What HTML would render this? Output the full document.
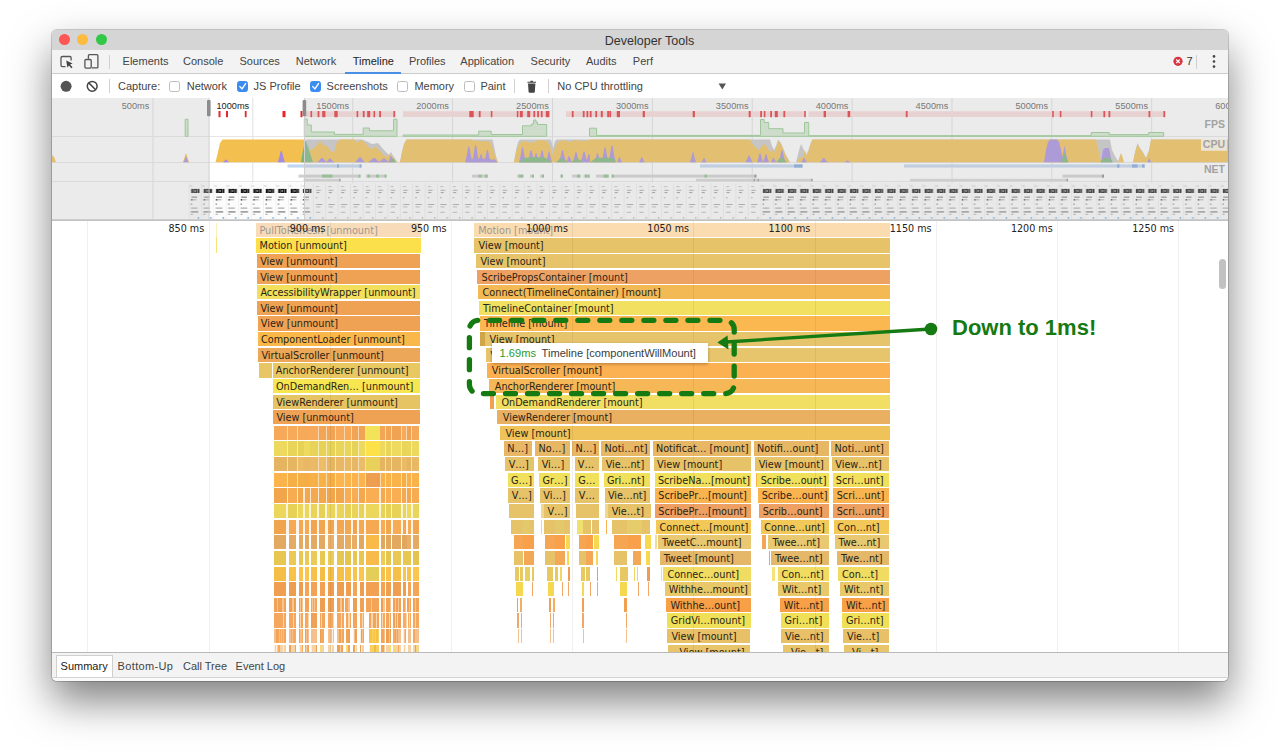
<!DOCTYPE html><html><head><meta charset="utf-8"><title>Developer Tools</title><style>
*{box-sizing:border-box;margin:0;padding:0}
html,body{width:1280px;height:755px;overflow:hidden;background:#fff}
body{position:relative;font-family:"Liberation Sans",sans-serif;font-size:11px;color:#333}
.abs{position:absolute}
#win{position:absolute;left:52px;top:30px;width:1176px;height:651px;border-radius:5px;background:#fff;
 box-shadow:0 20px 42px rgba(0,0,0,.5),0 0 0 1px rgba(0,0,0,.18);}
#clip{position:absolute;left:0;top:0;width:1176px;height:651px;border-radius:5px;overflow:hidden}
#title{position:absolute;left:0;top:0;width:100%;height:20px;background:#d5d5d5;text-align:center;font-size:12.5px;line-height:23px;color:#333;padding-left:19px}
.tl{position:absolute;top:4px;width:11px;height:11px;border-radius:50%}
#tabs{position:absolute;left:0;top:20px;width:100%;height:24px;background:#f3f3f3;border-bottom:1px solid #ccc}
#tabs span.t{position:absolute;top:4.3px;font-size:11px;line-height:14px;color:#444;white-space:nowrap}
#tools{position:absolute;left:0;top:44px;width:100%;height:25px;background:#fff;border-bottom:1px solid #ccc}
#tools span.t{position:absolute;top:5px;font-size:11px;line-height:14px;color:#444;white-space:nowrap}
.sep{position:absolute;width:1px;background:#d0d0d0}
.cb{position:absolute;top:7px;width:11px;height:11px;border:1px solid #bdbdbd;border-radius:2.5px;background:#fff}
.cb.on{background:#3b8cf0;border-color:#3b8cf0}
.fb{position:absolute;overflow:hidden;white-space:nowrap;font-family:"DejaVu Sans",sans-serif;font-size:9.7px;line-height:15.6px;color:#2a2416}
.rl{position:absolute;width:60px;text-align:right;font-family:"DejaVu Sans",sans-serif;font-size:9.6px;line-height:12px;color:#222;white-space:nowrap}

</style></head><body>
<div id="win"><div id="clip">
<div id="title">Developer Tools<div class="tl" style="left:7px;background:#fc5753"></div><div class="tl" style="left:24.8px;background:#fdbc40"></div><div class="tl" style="left:43.6px;background:#33c748"></div></div>
<div id="tabs">
<span class="t" style="left:70.6px;color:#444">Elements</span>
<span class="t" style="left:131.0px;color:#444">Console</span>
<span class="t" style="left:187.5px;color:#444">Sources</span>
<span class="t" style="left:243.8px;color:#444">Network</span>
<span class="t" style="left:300.8px;color:#222">Timeline</span>
<span class="t" style="left:356.9px;color:#444">Profiles</span>
<span class="t" style="left:408.3px;color:#444">Application</span>
<span class="t" style="left:478.6px;color:#444">Security</span>
<span class="t" style="left:534.0px;color:#444">Audits</span>
<span class="t" style="left:580.8px;color:#444">Perf</span>
<div class="abs" style="left:293px;top:22px;width:56px;height:2px;background:#4a8ee6"></div>
<div class="sep" style="left:57px;top:5px;height:14px"></div>
<div class="sep" style="left:1144px;top:5px;height:14px"></div>
<span class="t" style="left:1134.5px;color:#333">7</span>
<svg class="abs" style="left:0;top:0" width="1177" height="24" viewBox="52 50 1177 24">
<g fill="none" stroke="#555" stroke-width="1.3">
<path d="M65.5 66.6H62.3Q61 66.6 61 65.3V57.8Q61 56.5 62.3 56.5H69.8Q71.1 56.5 71.1 57.8V60.5"/>
<path d="M88.4 58.8V55.7Q88.4 54.7 89.4 54.7H96.9Q97.9 54.7 97.9 55.7V66.9Q97.9 67.9 96.9 67.9H91.8"/>
<rect x="84.9" y="59.5" width="6.3" height="8.6" rx="1.1"/>
</g>
<path d="M66.2 60.6L72.6 63.6L70.1 64.6L72.5 67.3L71.3 68.3L69 65.6L67.4 67.6Z" fill="#444"/>
<circle cx="1178" cy="61.3" r="4.6" fill="#d9333f"/>
<path d="M1176.2 59.5L1179.8 63.1M1179.8 59.5L1176.2 63.1" stroke="#fff" stroke-width="1.3"/>
<circle cx="1214" cy="56.4" r="1.3" fill="#444"/><circle cx="1214" cy="61.5" r="1.3" fill="#444"/><circle cx="1214" cy="66.6" r="1.3" fill="#444"/>
</svg>
</div>
<div id="tools">
<span class="t" style="left:66.0px">Capture:</span>
<span class="t" style="left:134.7px">Network</span>
<span class="t" style="left:201.6px">JS Profile</span>
<span class="t" style="left:274.6px">Screenshots</span>
<span class="t" style="left:362.4px">Memory</span>
<span class="t" style="left:428.4px">Paint</span>
<span class="t" style="left:505.3px">No CPU throttling</span>
<div class="cb" style="left:117.0px"></div>
<div class="cb on" style="left:185.3px"></div>
<div class="cb on" style="left:258.2px"></div>
<div class="cb" style="left:345.3px"></div>
<div class="cb" style="left:411.6px"></div>
<div class="sep" style="left:56.8px;top:5px;height:14px"></div>
<div class="sep" style="left:462.4px;top:5px;height:14px"></div>
<div class="sep" style="left:496.3px;top:5px;height:14px"></div>
<svg class="abs" style="left:0;top:0" width="1177" height="24" viewBox="52 74 1177 24">
<circle cx="66.1" cy="86.3" r="5.5" fill="#555"/>
<circle cx="92.2" cy="86.3" r="4.9" fill="none" stroke="#444" stroke-width="1.5"/>
<path d="M88.8 82.9L95.6 89.7" stroke="#444" stroke-width="1.5"/>
<g fill="none" stroke="#fff" stroke-width="1.4" stroke-linecap="round" stroke-linejoin="round">
<path d="M239.9 86.6L242 88.9L245.6 83.6"/><path d="M312.8 86.6L314.9 88.9L318.5 83.6"/></g>
<path d="M528 83.6H535.4L534.8 92Q534.7 92.8 533.9 92.8H529.5Q528.7 92.8 528.6 92ZM527.4 82.8V81.8H530.2L530.6 80.8H532.8L533.2 81.8H536V82.8Z" fill="#444"/>
<path d="M718.6 83.6H726L722.3 89.6Z" fill="#555"/>
</svg>
</div>
<svg class="abs" style="left:0;top:68px" width="1177" height="124" viewBox="52 98 1177 124" font-family="Liberation Sans, sans-serif">
<rect x="52" y="98" width="1177" height="122" fill="#fff"/>
<rect x="152.5" y="98" width="1" height="122" fill="#e0e0e0"/>
<rect x="252.3" y="98" width="1" height="122" fill="#e0e0e0"/>
<rect x="352.2" y="98" width="1" height="122" fill="#e0e0e0"/>
<rect x="452.1" y="98" width="1" height="122" fill="#e0e0e0"/>
<rect x="552.0" y="98" width="1" height="122" fill="#e0e0e0"/>
<rect x="651.9" y="98" width="1" height="122" fill="#e0e0e0"/>
<rect x="751.7" y="98" width="1" height="122" fill="#e0e0e0"/>
<rect x="851.6" y="98" width="1" height="122" fill="#e0e0e0"/>
<rect x="951.5" y="98" width="1" height="122" fill="#e0e0e0"/>
<rect x="1051.3" y="98" width="1" height="122" fill="#e0e0e0"/>
<rect x="1151.2" y="98" width="1" height="122" fill="#e0e0e0"/>
<rect x="1251.1" y="98" width="1" height="122" fill="#e0e0e0"/>
<rect x="52" y="136" width="1177" height="1" fill="#e6e6e6"/>
<rect x="52" y="162" width="1177" height="1" fill="#e6e6e6"/>
<rect x="52" y="181" width="1177" height="1" fill="#e6e6e6"/>
<rect x="304.5" y="111.3" width="90.5" height="5.6" fill="#fbd9d9"/>
<rect x="403" y="111.3" width="146.5" height="5.6" fill="#fbd9d9"/>
<rect x="566" y="111.3" width="239" height="5.6" fill="#fbd9d9"/>
<rect x="808.5" y="111.3" width="356.0" height="5.6" fill="#fbd9d9"/>
<rect x="218.5" y="111" width="2" height="6.2" fill="#e8262a"/>
<rect x="226" y="111" width="2" height="6.2" fill="#e8262a"/>
<rect x="244.8" y="111" width="1.8" height="6.2" fill="#e8262a"/>
<rect x="282.5" y="111" width="3" height="6.2" fill="#e8262a"/>
<rect x="300.5" y="111" width="2" height="6.2" fill="#e8262a"/>
<rect x="310.5" y="111" width="1.6" height="6.2" fill="#e8262a"/>
<rect x="317.6" y="111" width="1.8" height="6.2" fill="#e8262a"/>
<rect x="322.2" y="111" width="3.2" height="6.2" fill="#e8262a"/>
<rect x="334.3" y="111" width="3.4" height="6.2" fill="#e8262a"/>
<rect x="356.6" y="111" width="1.6" height="6.2" fill="#e8262a"/>
<rect x="362.8" y="111" width="1.8" height="6.2" fill="#e8262a"/>
<rect x="367.2" y="111" width="3" height="6.2" fill="#e8262a"/>
<rect x="373.5" y="111" width="1.6" height="6.2" fill="#e8262a"/>
<rect x="379.2" y="111" width="1.8" height="6.2" fill="#e8262a"/>
<rect x="393.4" y="111" width="1.8" height="6.2" fill="#e8262a"/>
<rect x="469.3" y="111" width="4.4" height="6.2" fill="#e8262a"/>
<rect x="478.8" y="111" width="1.8" height="6.2" fill="#e8262a"/>
<rect x="490.8" y="111" width="1.6" height="6.2" fill="#e8262a"/>
<rect x="516.8" y="111" width="1.6" height="6.2" fill="#e8262a"/>
<rect x="519.8" y="111" width="3" height="6.2" fill="#e8262a"/>
<rect x="527.2" y="111" width="3" height="6.2" fill="#e8262a"/>
<rect x="533.4" y="111" width="1.8" height="6.2" fill="#e8262a"/>
<rect x="537.2" y="111" width="1.8" height="6.2" fill="#e8262a"/>
<rect x="540.8" y="111" width="1.8" height="6.2" fill="#e8262a"/>
<rect x="545.8" y="111" width="3.6" height="6.2" fill="#e8262a"/>
<rect x="571.8" y="111" width="1.8" height="6.2" fill="#e8262a"/>
<rect x="582.8" y="111" width="1.8" height="6.2" fill="#e8262a"/>
<rect x="586.5" y="111" width="1.8" height="6.2" fill="#e8262a"/>
<rect x="589.8" y="111" width="1.8" height="6.2" fill="#e8262a"/>
<rect x="595.3" y="111" width="1.8" height="6.2" fill="#e8262a"/>
<rect x="600.8" y="111" width="2" height="6.2" fill="#e8262a"/>
<rect x="607.2" y="111" width="1.8" height="6.2" fill="#e8262a"/>
<rect x="609.3" y="111" width="1.8" height="6.2" fill="#e8262a"/>
<rect x="616.8" y="111" width="3.2" height="6.2" fill="#e8262a"/>
<rect x="642.7" y="111" width="2.2" height="6.2" fill="#e8262a"/>
<rect x="692.7" y="111" width="2.2" height="6.2" fill="#e8262a"/>
<rect x="748.7" y="111" width="2" height="6.2" fill="#e8262a"/>
<rect x="760.2" y="111" width="1.8" height="6.2" fill="#e8262a"/>
<rect x="763.8" y="111" width="1.6" height="6.2" fill="#e8262a"/>
<rect x="770.2" y="111" width="1.8" height="6.2" fill="#e8262a"/>
<rect x="774.8" y="111" width="3" height="6.2" fill="#e8262a"/>
<rect x="783.4" y="111" width="1.8" height="6.2" fill="#e8262a"/>
<rect x="804.2" y="111" width="1.6" height="6.2" fill="#e8262a"/>
<rect x="823.6" y="111" width="2.4" height="6.2" fill="#e8262a"/>
<rect x="847.6" y="111" width="2.6" height="6.2" fill="#e8262a"/>
<rect x="905.8" y="111" width="1.8" height="6.2" fill="#e8262a"/>
<rect x="1052.2" y="111" width="1.6" height="6.2" fill="#e8262a"/>
<rect x="1059.8" y="111" width="1.6" height="6.2" fill="#e8262a"/>
<rect x="1090.8" y="111" width="1.6" height="6.2" fill="#e8262a"/>
<rect x="1103.4" y="111" width="1.8" height="6.2" fill="#e8262a"/>
<rect x="1108.5" y="111" width="1.8" height="6.2" fill="#e8262a"/>
<rect x="1148.5" y="111" width="1.8" height="6.2" fill="#e8262a"/>
<rect x="1163.4" y="111" width="1.8" height="6.2" fill="#e8262a"/>
<path d="M185.2 136.3V119.3H188V136.3Z" fill="#d6ebd1" stroke="#8fcb89" stroke-width="1" stroke-linejoin="round"/>
<path d="M304.3 136.3V119H307.2V125H311.3V132H334.5V134.4H363.2V128H369.5V130.8H393.6V119.2H397V136.3Z" fill="#d6ebd1" stroke="#8fcb89" stroke-width="1" stroke-linejoin="round"/>
<path d="M403 136.3V135H478.7V131.2H491.2V134.5H522.5V125.8H531.5V124H533.6V120H536V122.3H537.5V124.5H546.7V136.3Z" fill="#d6ebd1" stroke="#8fcb89" stroke-width="1" stroke-linejoin="round"/>
<path d="M589.5 136.3V128.2H596.6V135.4H760.5V119.5H764.2V122.5H768.7V128.7H783V133H804.5V122.5H808.7V135.7H1091.2V132.5H1109.2V134.6H1148.7V132.5H1163.7V136.3Z" fill="#d6ebd1" stroke="#8fcb89" stroke-width="1" stroke-linejoin="round"/>
<path d="M52.0 157.0 L53.0 155.0 L54.5 158.0 L56.0 162.3 L52.0 162.3Z" fill="#f3c04f"/>
<path d="M182.8 162.3 L184.2 158.4 L185.4 154.3 L186.0 153.6 L186.6 154.3 L187.8 158.4 L189.2 162.3Z" fill="#f3c04f"/>
<path d="M183.4 162.3 L184.6 159.9 L185.5 157.4 L186.0 157.0 L186.5 157.4 L187.4 159.9 L188.6 162.3Z" fill="#a68be3"/>
<path d="M215.5 162.3 L218.0 152.0 L220.0 143.0 L222.5 139.6 L304.5 139.6 L304.5 162.3Z" fill="#f3c04f"/>
<path d="M223.0 162.3 L224.3 161.0 L225.4 159.7 L226.0 159.5 L226.6 159.7 L227.7 161.0 L229.0 162.3Z" fill="#a68be3"/>
<path d="M277.7 162.3 L279.3 157.0 L280.6 151.5 L281.3 150.6 L282.0 151.5 L283.3 157.0 L284.9 162.3Z" fill="#a68be3"/>
<path d="M301.0 162.3 L304.0 146.0 L306.0 139.6 L362.0 139.6 L366.0 141.0 L372.0 144.0 L378.0 143.0 L384.0 150.0 L389.0 155.0 L391.0 152.0 L394.0 157.0 L397.5 162.3Z" fill="#c9c9c9"/>
<path d="M301.0 162.3 L304.0 150.0 L311.0 150.0 L316.0 146.0 L320.0 141.0 L323.0 145.0 L327.0 146.0 L331.0 151.0 L333.8 153.0 L337.0 142.0 L340.0 139.6 L355.0 139.6 L357.0 143.0 L359.0 141.0 L362.0 140.0 L366.0 144.0 L371.0 149.0 L376.0 147.0 L381.0 152.0 L386.0 157.0 L390.0 154.0 L393.0 158.0 L397.5 162.3Z" fill="#f3c04f"/>
<path d="M301.0 162.3 L303.0 150.0 L305.5 140.0 L308.0 147.0 L310.0 153.0 L313.0 162.3Z" fill="#77b577"/>
<path d="M317.0 162.3 L319.2 160.4 L321.0 158.3 L322.0 158.0 L323.0 158.3 L324.8 160.4 L327.0 162.3Z" fill="#a68be3"/>
<path d="M326.0 162.3 L327.8 160.6 L329.2 158.8 L330.0 158.5 L330.8 158.8 L332.2 160.6 L334.0 162.3Z" fill="#a68be3"/>
<path d="M355.0 162.3 L357.2 159.9 L359.0 157.4 L360.0 157.0 L361.0 157.4 L362.8 159.9 L365.0 162.3Z" fill="#a68be3"/>
<path d="M368.0 162.3 L370.7 160.4 L372.8 158.3 L374.0 158.0 L375.2 158.3 L377.3 160.4 L380.0 162.3Z" fill="#a68be3"/>
<path d="M379.0 162.3 L381.2 160.6 L383.0 158.8 L384.0 158.5 L385.0 158.8 L386.8 160.6 L389.0 162.3Z" fill="#a68be3"/>
<path d="M388.0 162.3 L389.4 159.5 L390.4 156.5 L391.0 156.0 L391.6 156.5 L392.6 159.5 L394.0 162.3Z" fill="#a68be3"/>
<path d="M390.0 162.3 L391.4 160.4 L392.4 158.3 L393.0 158.0 L393.6 158.3 L394.6 160.4 L396.0 162.3Z" fill="#77b577"/>
<path d="M400.0 162.3 L402.0 152.0 L404.0 144.0 L406.5 139.6 L492.5 139.6 L494.0 146.0 L496.0 156.0 L498.0 162.3Z" fill="#c9c9c9"/>
<path d="M400.0 162.3 L402.0 152.0 L404.0 144.0 L406.5 139.6 L472.0 139.6 L474.0 141.0 L478.0 140.5 L483.0 141.5 L488.0 141.0 L491.0 143.0 L493.0 150.0 L495.5 157.0 L498.0 162.3Z" fill="#f3c04f"/>
<path d="M465.2 162.3 L466.8 155.0 L468.1 147.3 L468.8 146.0 L469.5 147.3 L470.8 155.0 L472.4 162.3Z" fill="#a68be3"/>
<path d="M472.2 162.3 L473.7 154.3 L474.9 146.0 L475.6 144.6 L476.3 146.0 L477.5 154.3 L479.0 162.3Z" fill="#a68be3"/>
<path d="M478.0 162.3 L479.4 158.6 L480.4 154.7 L481.0 154.0 L481.6 154.7 L482.6 158.6 L484.0 162.3Z" fill="#a68be3"/>
<path d="M484.2 162.3 L485.6 156.5 L486.8 150.5 L487.4 149.5 L488.0 150.5 L489.2 156.5 L490.6 162.3Z" fill="#a68be3"/>
<path d="M490.5 162.3 L492.1 160.8 L493.3 159.3 L494.0 159.0 L494.7 159.3 L495.9 160.8 L497.5 162.3Z" fill="#a68be3"/>
<path d="M466.0 162.3 L470.0 159.0 L480.0 158.5 L490.0 159.0 L497.0 162.3Z" fill="#a68be3"/>
<path d="M514.0 162.3 L516.0 150.0 L518.0 142.0 L520.0 139.6 L551.0 139.6 L553.0 148.0 L555.0 141.0 L557.0 139.6 L590.0 139.6 L590.0 162.3Z" fill="#c9c9c9"/>
<path d="M514.0 162.3 L516.0 152.0 L518.0 146.0 L521.0 142.0 L526.0 141.0 L531.0 143.0 L536.0 141.0 L541.0 140.0 L547.0 141.0 L550.0 146.0 L552.5 155.0 L555.0 148.0 L558.0 142.0 L563.0 140.0 L570.0 142.0 L575.0 140.0 L582.0 141.0 L590.0 140.0 L590.0 162.3Z" fill="#f3c04f"/>
<path d="M519.1 162.3 L520.6 155.4 L521.8 148.2 L522.5 147.0 L523.2 148.2 L524.4 155.4 L525.9 162.3Z" fill="#a68be3"/>
<path d="M527.4 162.3 L529.0 156.8 L530.3 151.0 L531.0 150.0 L531.7 151.0 L533.0 156.8 L534.6 162.3Z" fill="#a68be3"/>
<path d="M533.0 162.3 L534.4 158.1 L535.4 153.7 L536.0 153.0 L536.6 153.7 L537.6 158.1 L539.0 162.3Z" fill="#a68be3"/>
<path d="M538.6 162.3 L540.1 156.8 L541.3 151.0 L542.0 150.0 L542.7 151.0 L543.9 156.8 L545.4 162.3Z" fill="#a68be3"/>
<path d="M546.0 162.3 L547.4 157.2 L548.4 151.9 L549.0 151.0 L549.6 151.9 L550.6 157.2 L552.0 162.3Z" fill="#a68be3"/>
<path d="M558.9 162.3 L560.5 156.8 L561.8 151.0 L562.5 150.0 L563.2 151.0 L564.5 156.8 L566.1 162.3Z" fill="#a68be3"/>
<path d="M566.0 162.3 L567.4 159.5 L568.4 156.5 L569.0 156.0 L569.6 156.5 L570.6 159.5 L572.0 162.3Z" fill="#a68be3"/>
<path d="M572.5 162.3 L574.1 157.7 L575.3 152.8 L576.0 152.0 L576.7 152.8 L577.9 157.7 L579.5 162.3Z" fill="#a68be3"/>
<path d="M580.5 162.3 L582.1 157.2 L583.3 151.9 L584.0 151.0 L584.7 151.9 L585.9 157.2 L587.5 162.3Z" fill="#a68be3"/>
<path d="M586.0 162.3 L587.4 158.6 L588.4 154.7 L589.0 154.0 L589.6 154.7 L590.6 158.6 L592.0 162.3Z" fill="#a68be3"/>
<path d="M519.0 162.3 L524.0 158.0 L533.0 157.0 L545.0 157.5 L552.0 162.3Z" fill="#77b577"/>
<path d="M556.0 162.3 L561.0 158.0 L568.0 162.3Z" fill="#77b577"/>
<path d="M571.0 162.3 L577.0 158.0 L583.0 162.3Z" fill="#77b577"/>
<path d="M519.0 162.3 L528.0 159.5 L540.0 159.0 L552.0 162.3Z" fill="#77b577"/>
<path d="M590.0 162.3 L590.0 139.6 L750.0 139.6 L770.0 139.6 L772.0 146.0 L774.0 150.0 L776.0 146.0 L778.0 139.6 L781.0 143.0 L786.0 155.0 L790.0 162.3 L796.0 162.3 L799.0 150.0 L801.0 144.0 L803.0 148.0 L806.0 155.0 L808.5 150.0 L811.0 142.0 L812.5 139.6 L1096.0 139.6 L1110.0 139.6 L1112.0 150.0 L1116.0 158.0 L1119.0 162.3 L1124.0 162.3 L1133.0 162.3 L1135.0 152.0 L1137.5 143.0 L1140.0 148.0 L1143.0 152.0 L1146.0 158.0 L1149.0 150.0 L1151.0 139.6 L1228.5 139.6 L1228.5 162.3Z" fill="#c9c9c9"/>
<path d="M590.0 162.3 L590.0 139.6 L750.0 139.6 L752.0 143.0 L755.0 147.0 L759.0 150.0 L762.0 146.0 L765.0 144.0 L768.0 149.0 L771.0 152.0 L773.0 149.0 L774.5 153.0 L776.5 147.0 L778.5 141.0 L781.0 144.0 L786.0 156.0 L790.0 162.3 L797.0 162.3 L799.0 158.0 L803.0 157.0 L805.0 150.0 L806.5 156.0 L808.5 151.0 L811.0 143.0 L812.5 139.6 L1096.0 139.6 L1098.0 148.0 L1100.0 158.0 L1102.0 162.3 L1118.0 162.3 L1119.5 157.0 L1121.0 153.0 L1122.5 157.0 L1124.0 162.3 L1133.0 162.3 L1135.0 153.0 L1137.5 144.0 L1140.0 149.0 L1143.0 153.0 L1146.0 158.5 L1149.0 151.0 L1151.0 139.6 L1228.5 139.6 L1228.5 162.3Z" fill="#f3c04f"/>
<path d="M594.5 162.3 L595.9 158.1 L596.9 153.7 L597.5 153.0 L598.1 153.7 L599.1 158.1 L600.5 162.3Z" fill="#a68be3"/>
<path d="M601.6 162.3 L603.1 155.4 L604.3 148.2 L605.0 147.0 L605.7 148.2 L606.9 155.4 L608.4 162.3Z" fill="#a68be3"/>
<path d="M608.4 162.3 L610.0 154.5 L611.3 146.4 L612.0 145.0 L612.7 146.4 L614.0 154.5 L615.6 162.3Z" fill="#a68be3"/>
<path d="M616.9 162.3 L618.1 159.9 L619.0 157.4 L619.5 157.0 L620.0 157.4 L620.9 159.9 L622.1 162.3Z" fill="#a68be3"/>
<path d="M639.0 162.3 L640.3 159.9 L641.2 157.4 L641.8 157.0 L642.4 157.4 L643.3 159.9 L644.6 162.3Z" fill="#a68be3"/>
<path d="M690.0 162.3 L691.4 157.7 L692.4 152.8 L693.0 152.0 L693.6 152.8 L694.6 157.7 L696.0 162.3Z" fill="#a68be3"/>
<path d="M701.4 162.3 L702.6 160.4 L703.5 158.3 L704.0 158.0 L704.5 158.3 L705.4 160.4 L706.6 162.3Z" fill="#a68be3"/>
<path d="M745.4 162.3 L747.0 159.2 L748.3 156.0 L749.0 155.5 L749.7 156.0 L751.0 159.2 L752.6 162.3Z" fill="#a68be3"/>
<path d="M757.0 162.3 L758.4 158.1 L759.4 153.7 L760.0 153.0 L760.6 153.7 L761.6 158.1 L763.0 162.3Z" fill="#a68be3"/>
<path d="M763.0 162.3 L764.4 158.6 L765.4 154.7 L766.0 154.0 L766.6 154.7 L767.6 158.6 L769.0 162.3Z" fill="#a68be3"/>
<path d="M770.9 162.3 L772.1 160.1 L773.0 157.9 L773.5 157.5 L774.0 157.9 L774.9 160.1 L776.1 162.3Z" fill="#a68be3"/>
<path d="M778.6 162.3 L780.1 156.8 L781.3 151.0 L782.0 150.0 L782.7 151.0 L783.9 156.8 L785.4 162.3Z" fill="#a68be3"/>
<path d="M801.0 162.3 L802.4 160.4 L803.4 158.3 L804.0 158.0 L804.6 158.3 L805.6 160.4 L807.0 162.3Z" fill="#a68be3"/>
<path d="M819.8 162.3 L821.6 160.4 L823.0 158.3 L823.8 158.0 L824.6 158.3 L826.0 160.4 L827.8 162.3Z" fill="#a68be3"/>
<path d="M844.5 162.3 L845.9 161.5 L846.9 160.6 L847.5 160.5 L848.1 160.6 L849.1 161.5 L850.5 162.3Z" fill="#a68be3"/>
<path d="M590.0 162.3 L596.0 158.0 L606.0 157.5 L614.0 158.5 L616.0 162.3Z" fill="#77b577"/>
<path d="M776.0 162.3 L781.0 157.0 L787.0 162.3Z" fill="#77b577"/>
<path d="M1044.0 162.3 L1046.0 150.0 L1048.0 142.0 L1050.0 139.6 L1057.0 139.6 L1059.0 142.0 L1061.0 150.0 L1062.5 157.0 L1064.5 145.5 L1066.5 156.0 L1068.0 162.3Z" fill="#a68be3"/>
<path d="M1060.5 162.3 L1064.5 153.0 L1068.0 162.3Z" fill="#77b577"/>
<path d="M1101.0 162.3 L1103.0 150.0 L1105.0 148.0 L1109.0 148.0 L1111.0 158.0 L1112.0 162.3Z" fill="#a68be3"/>
<path d="M1100.0 162.3 L1104.0 158.0 L1110.0 157.5 L1113.0 162.3Z" fill="#77b577"/>
<path d="M1147.3 162.3 L1148.2 160.6 L1148.9 158.8 L1149.3 158.5 L1149.7 158.8 L1150.4 160.6 L1151.3 162.3Z" fill="#a68be3"/>
<rect x="287.5" y="164.4" width="74.0" height="3.2" fill="#c3d6f0"/>
<rect x="700" y="164.4" width="102.5" height="3.2" fill="#c3d6f0"/>
<rect x="904" y="164.4" width="241" height="3.2" fill="#c3d6f0"/>
<rect x="337" y="164.4" width="2" height="3.2" fill="#7fa6dc"/>
<rect x="359.5" y="164.4" width="2" height="3.2" fill="#7fa6dc"/>
<rect x="794" y="164.4" width="8.5" height="3.2" fill="#7fa6dc"/>
<rect x="1117" y="164.4" width="2.5" height="3.2" fill="#7fa6dc"/>
<rect x="1132" y="164.4" width="5.5" height="3.2" fill="#7fa6dc"/>
<rect x="1142" y="164.4" width="2.5" height="3.2" fill="#7fa6dc"/>
<rect x="298.5" y="174.6" width="41.5" height="3" fill="#cfcfcf"/>
<rect x="339.5" y="174.6" width="21.0" height="3" fill="#cfcfcf"/>
<rect x="366" y="174.6" width="20.5" height="3" fill="#cfcfcf"/>
<rect x="472" y="174.6" width="16" height="3" fill="#cfcfcf"/>
<rect x="517" y="174.6" width="7" height="3" fill="#cfcfcf"/>
<rect x="530" y="174.6" width="4" height="3" fill="#cfcfcf"/>
<rect x="540" y="174.6" width="4" height="3" fill="#cfcfcf"/>
<rect x="560" y="174.6" width="3" height="3" fill="#cfcfcf"/>
<rect x="572" y="174.6" width="9" height="3" fill="#cfcfcf"/>
<rect x="583.5" y="174.6" width="6.5" height="3" fill="#cfcfcf"/>
<rect x="596" y="174.6" width="13" height="3" fill="#cfcfcf"/>
<rect x="611" y="174.6" width="3" height="3" fill="#cfcfcf"/>
<rect x="614" y="174.6" width="142" height="3" fill="#cfcfcf"/>
<rect x="1062.5" y="174.6" width="41.5" height="3" fill="#cfcfcf"/>
<rect x="322" y="174.6" width="10.5" height="3" fill="#86c186"/>
<rect x="358.5" y="174.6" width="2" height="3" fill="#86c186"/>
<rect x="367.5" y="174.6" width="2.5" height="3" fill="#86c186"/>
<rect x="376" y="174.6" width="3" height="3" fill="#86c186"/>
<rect x="384.5" y="174.6" width="2" height="3" fill="#86c186"/>
<rect x="478.5" y="174.6" width="3" height="3" fill="#86c186"/>
<rect x="485" y="174.6" width="2.5" height="3" fill="#86c186"/>
<rect x="519" y="174.6" width="4" height="3" fill="#86c186"/>
<rect x="532" y="174.6" width="2" height="3" fill="#86c186"/>
<rect x="542" y="174.6" width="2" height="3" fill="#86c186"/>
<rect x="561" y="174.6" width="2" height="3" fill="#86c186"/>
<rect x="577" y="174.6" width="3" height="3" fill="#86c186"/>
<rect x="585" y="174.6" width="2" height="3" fill="#86c186"/>
<rect x="587.5" y="174.6" width="2" height="3" fill="#86c186"/>
<rect x="603.5" y="174.6" width="5" height="3" fill="#86c186"/>
<rect x="612" y="174.6" width="2" height="3" fill="#86c186"/>
<rect x="704.5" y="174.6" width="2.5" height="3" fill="#86c186"/>
<rect x="754.5" y="174.6" width="2" height="3" fill="#8a8a8a"/>
<rect x="1102" y="174.6" width="2" height="3" fill="#8a8a8a"/>
<rect x="303.5" y="178.8" width="36.5" height="2.6" fill="#d6d6d6"/>
<rect x="696" y="178.8" width="116.5" height="2.6" fill="#d6d6d6"/>
<rect x="910" y="178.8" width="157.5" height="2.6" fill="#d6d6d6"/>
<rect x="753.5" y="178.8" width="1.6" height="2.6" fill="#9a9a9a"/>
<rect x="757.5" y="178.8" width="1.6" height="2.6" fill="#9a9a9a"/>
<rect x="811" y="178.8" width="1.6" height="2.6" fill="#9a9a9a"/>
<rect x="1066.5" y="178.8" width="1.6" height="2.6" fill="#9a9a9a"/>
<rect x="339" y="178.8" width="1.6" height="2.6" fill="#9a9a9a"/>
<defs>
<pattern id="thA" x="188.5" y="183" width="12.43" height="38" patternUnits="userSpaceOnUse"><rect x="0" y="0" width="12.43" height="38" fill="#fcfcfc"/><rect x="0" y="0" width=".6" height="38" fill="#ebebeb"/><rect x="2.7" y="5.9" width="2" height="4.1" fill="#111"/><rect x="5" y="5.9" width="3.7" height="4.1" fill="#111"/><rect x="6.1" y="7.1" width="1.4" height="1.7" fill="#aaa"/><rect x="9" y="5.9" width="2" height="4.1" fill="#111"/><rect x="1.2" y="2.6" width="2.4" height=".8" fill="#bbb"/><rect x="3" y="13.6" width="5.6" height="1.1" fill="#777"/><rect x="2.6" y="16" width="1.6" height="1.6" fill="#444"/><rect x="4.8" y="16.3" width="3.4" height="1" fill="#aaa"/><rect x="2.4" y="20.6" width="1.2" height="1.1" fill="#555"/><rect x="2.4" y="24.6" width="6.6" height="1" fill="#9a9a9a"/><rect x="2.4" y="28.3" width="7.4" height="1.2" fill="#777"/><rect x="2.4" y="30.8" width="2" height="1" fill="#999"/><rect x="9.2" y="34.2" width="1.5" height="1.4" fill="#4a9fe6"/></pattern>
<pattern id="thB" x="188.5" y="183" width="12.43" height="38" patternUnits="userSpaceOnUse"><rect x="0" y="0" width="12.43" height="38" fill="#fcfcfc"/><rect x="0" y="0" width=".6" height="38" fill="#e6e6e6"/><rect x="3.2" y="3.2" width="3" height=".9" fill="#b5b5b5"/><rect x="3.4" y="6.8" width="4.6" height="1" fill="#a5a5a5"/><rect x="3.6" y="9" width="3" height="1.1" fill="#999"/><rect x="3.2" y="14.2" width="1.2" height="1.1" fill="#888"/><rect x="3.2" y="21" width="6.4" height="1" fill="#a5a5a5"/><rect x="3.4" y="23.4" width="4.2" height="1" fill="#b5b5b5"/><rect x="3.2" y="28.8" width="4.4" height="1" fill="#b5b5b5"/><rect x="9.5" y="34.2" width="1.3" height="1.2" fill="#999"/></pattern>
</defs>
<rect x="188.5" y="183" width="124.3" height="36.5" fill="url(#thA)"/>
<rect x="312.8" y="183" width="447.5" height="36.5" fill="url(#thB)"/>
<rect x="760.3" y="183" width="468.5" height="36.5" fill="url(#thA)"/>
<rect x="52" y="98" width="157" height="122" fill="rgba(190,190,190,0.31)"/>
<rect x="304.5" y="98" width="925" height="122" fill="rgba(190,190,190,0.31)"/>
<rect x="208.6" y="98" width="1" height="122" fill="#cfcfcf"/><rect x="304" y="98" width="1" height="122" fill="#cfcfcf"/>
<text x="149.3" y="108.6" font-size="9.2" text-anchor="end" fill="#777">500ms</text>
<text x="249.2" y="108.6" font-size="9.2" text-anchor="end" fill="#222">1000ms</text>
<text x="349.0" y="108.6" font-size="9.2" text-anchor="end" fill="#777">1500ms</text>
<text x="448.9" y="108.6" font-size="9.2" text-anchor="end" fill="#777">2000ms</text>
<text x="548.8" y="108.6" font-size="9.2" text-anchor="end" fill="#777">2500ms</text>
<text x="648.6" y="108.6" font-size="9.2" text-anchor="end" fill="#777">3000ms</text>
<text x="748.5" y="108.6" font-size="9.2" text-anchor="end" fill="#777">3500ms</text>
<text x="848.4" y="108.6" font-size="9.2" text-anchor="end" fill="#777">4000ms</text>
<text x="948.3" y="108.6" font-size="9.2" text-anchor="end" fill="#777">4500ms</text>
<text x="1048.1" y="108.6" font-size="9.2" text-anchor="end" fill="#777">5000ms</text>
<text x="1148.0" y="108.6" font-size="9.2" text-anchor="end" fill="#777">5500ms</text>
<text x="1247.9" y="108.6" font-size="9.2" text-anchor="end" fill="#777">6000ms</text>
<rect x="207" y="100" width="3.6" height="16.2" rx="1" fill="#8c8c8c"/><rect x="302.6" y="100" width="3.6" height="16.2" rx="1" fill="#8c8c8c"/>
<rect x="1203" y="118.80000000000001" width="24" height="12" fill="rgba(236,236,236,.8)"/>
<text x="1225" y="128.3" font-size="10.5" font-weight="bold" text-anchor="end" fill="#a2a2a2">FPS</text>
<rect x="1201" y="138.8" width="26" height="12" fill="rgba(236,236,236,.8)"/>
<text x="1225" y="148.3" font-size="10.5" font-weight="bold" text-anchor="end" fill="#a2a2a2">CPU</text>
<rect x="1202" y="163.8" width="25" height="12" fill="rgba(236,236,236,.8)"/>
<text x="1225" y="173.3" font-size="10.5" font-weight="bold" text-anchor="end" fill="#a2a2a2">NET</text>
<rect x="52" y="219.3" width="1177" height="2" fill="#c2c2c2"/>
</svg>
<div id="flame" class="abs" style="left:0;top:191.3px;width:1177px;height:430.7px;overflow:hidden;background:#fff"></div>
<div class="fb" style="left:164.4px;top:192.5px;width:1px;height:30px;background:#f7e27a"></div>
<div class="fb" style="left:204.2px;top:192.7px;width:164.4px;height:14.3px;background:#f1b36c;padding-left:3.2px">PullToRefresh [unmount]</div>
<div class="fb" style="left:204.4px;top:208.3px;width:164.2px;height:14.3px;background:#fbe04b;padding-left:3.2px">Motion [unmount]</div>
<div class="fb" style="left:205.0px;top:223.9px;width:163.4px;height:14.3px;background:#f0a254;padding-left:3.2px">View [unmount]</div>
<div class="fb" style="left:205.0px;top:239.6px;width:163.0px;height:14.3px;background:#f0a254;padding-left:3.2px">View [unmount]</div>
<div class="fb" style="left:205.2px;top:255.2px;width:162.8px;height:14.3px;background:#f2e05c;padding-left:3.2px">AccessibilityWrapper [unmount]</div>
<div class="fb" style="left:205.2px;top:270.8px;width:162.8px;height:14.3px;background:#f0a254;padding-left:3.2px">View [unmount]</div>
<div class="fb" style="left:205.6px;top:286.4px;width:162.4px;height:14.3px;background:#f0a254;padding-left:3.2px">View [unmount]</div>
<div class="fb" style="left:205.8px;top:302.1px;width:162.2px;height:14.3px;background:#fbb84a;padding-left:3.2px">ComponentLoader [unmount]</div>
<div class="fb" style="left:206.2px;top:317.7px;width:161.8px;height:14.3px;background:#eda758;padding-left:3.2px">VirtualScroller [unmount]</div>
<div class="fb" style="left:206.6px;top:333.3px;width:13.6px;height:14.3px;background:#e8c666;"></div>
<div class="fb" style="left:220.6px;top:333.3px;width:147.4px;height:14.3px;background:#e9c862;padding-left:3.2px">AnchorRenderer [unmount]</div>
<div class="fb" style="left:220.8px;top:348.9px;width:147.2px;height:14.3px;background:#f8e650;padding-left:3.2px">OnDemandRen… [unmount]</div>
<div class="fb" style="left:221.0px;top:364.6px;width:147.0px;height:14.3px;background:#e6c464;padding-left:3.2px">ViewRenderer [unmount]</div>
<div class="fb" style="left:221.2px;top:380.2px;width:146.8px;height:14.3px;background:#f0a254;padding-left:3.2px">View [unmount]</div>
<div class="fb" style="left:221.8px;top:395.8px;width:145.6px;height:14.3px;background:#f9d6b2;"></div>
<div class="fb" style="left:221.8px;top:395.8px;width:13.2px;height:14.3px;background:#f5a959;"></div>
<div class="fb" style="left:235.7px;top:395.8px;width:9.4px;height:14.3px;background:#f6aa5a;"></div>
<div class="fb" style="left:245.9px;top:395.8px;width:5.8px;height:14.3px;background:#f5a959;"></div>
<div class="fb" style="left:252.4px;top:395.8px;width:5.3px;height:14.3px;background:#f5a959;"></div>
<div class="fb" style="left:258.4px;top:395.8px;width:7.5px;height:14.3px;background:#f6aa5a;"></div>
<div class="fb" style="left:266.6px;top:395.8px;width:7.4px;height:14.3px;background:#f1a555;"></div>
<div class="fb" style="left:274.8px;top:395.8px;width:8.5px;height:14.3px;background:#f0a454;"></div>
<div class="fb" style="left:284.0px;top:395.8px;width:8.1px;height:14.3px;background:#f6aa5a;"></div>
<div class="fb" style="left:292.9px;top:395.8px;width:6.3px;height:14.3px;background:#f5a959;"></div>
<div class="fb" style="left:299.9px;top:395.8px;width:6.1px;height:14.3px;background:#f0a454;"></div>
<div class="fb" style="left:306.7px;top:395.8px;width:6.1px;height:14.3px;background:#efa353;"></div>
<div class="fb" style="left:313.5px;top:395.8px;width:14.1px;height:14.3px;background:#f3e35b;"></div>
<div class="fb" style="left:328.4px;top:395.8px;width:4.8px;height:14.3px;background:#f2a656;"></div>
<div class="fb" style="left:333.9px;top:395.8px;width:5.5px;height:14.3px;background:#f0a454;"></div>
<div class="fb" style="left:340.1px;top:395.8px;width:9.4px;height:14.3px;background:#efa353;"></div>
<div class="fb" style="left:350.2px;top:395.8px;width:4.3px;height:14.3px;background:#f6aa5a;"></div>
<div class="fb" style="left:355.2px;top:395.8px;width:4.1px;height:14.3px;background:#eea252;"></div>
<div class="fb" style="left:360.1px;top:395.8px;width:7.3px;height:14.3px;background:#f4a858;"></div>
<div class="fb" style="left:221.8px;top:411.4px;width:145.6px;height:14.3px;background:#f5ecb4;"></div>
<div class="fb" style="left:221.8px;top:411.4px;width:13.2px;height:14.3px;background:#edd95d;"></div>
<div class="fb" style="left:235.7px;top:411.4px;width:9.4px;height:14.3px;background:#e8d458;"></div>
<div class="fb" style="left:245.9px;top:411.4px;width:5.8px;height:14.3px;background:#e6d256;"></div>
<div class="fb" style="left:252.4px;top:411.4px;width:5.3px;height:14.3px;background:#eeda5e;"></div>
<div class="fb" style="left:258.4px;top:411.4px;width:7.5px;height:14.3px;background:#e7d357;"></div>
<div class="fb" style="left:266.6px;top:411.4px;width:7.4px;height:14.3px;background:#e6d256;"></div>
<div class="fb" style="left:274.8px;top:411.4px;width:8.5px;height:14.3px;background:#e6d256;"></div>
<div class="fb" style="left:284.0px;top:411.4px;width:8.1px;height:14.3px;background:#e9d559;"></div>
<div class="fb" style="left:292.9px;top:411.4px;width:6.3px;height:14.3px;background:#e9d559;"></div>
<div class="fb" style="left:299.9px;top:411.4px;width:6.1px;height:14.3px;background:#e6d256;"></div>
<div class="fb" style="left:306.7px;top:411.4px;width:6.1px;height:14.3px;background:#edd95d;"></div>
<div class="fb" style="left:313.5px;top:411.4px;width:14.1px;height:14.3px;background:#fce149;"></div>
<div class="fb" style="left:328.4px;top:411.4px;width:4.8px;height:14.3px;background:#edd95d;"></div>
<div class="fb" style="left:333.9px;top:411.4px;width:5.5px;height:14.3px;background:#e9d559;"></div>
<div class="fb" style="left:340.1px;top:411.4px;width:9.4px;height:14.3px;background:#eeda5e;"></div>
<div class="fb" style="left:350.3px;top:411.4px;width:4.3px;height:14.3px;background:#e9d559;"></div>
<div class="fb" style="left:355.3px;top:411.4px;width:4.1px;height:14.3px;background:#ead65a;"></div>
<div class="fb" style="left:360.1px;top:411.4px;width:7.3px;height:14.3px;background:#edd95d;"></div>
<div class="fb" style="left:221.8px;top:427.1px;width:145.6px;height:14.3px;background:#f4dfb9;"></div>
<div class="fb" style="left:221.8px;top:427.1px;width:13.1px;height:14.3px;background:#e4b460;"></div>
<div class="fb" style="left:235.8px;top:427.1px;width:9.4px;height:14.3px;background:#e5b561;"></div>
<div class="fb" style="left:245.9px;top:427.1px;width:5.7px;height:14.3px;background:#ebbb67;"></div>
<div class="fb" style="left:252.4px;top:427.1px;width:5.2px;height:14.3px;background:#e8b864;"></div>
<div class="fb" style="left:258.4px;top:427.1px;width:7.5px;height:14.3px;background:#eaba66;"></div>
<div class="fb" style="left:266.6px;top:427.1px;width:7.3px;height:14.3px;background:#ecbc68;"></div>
<div class="fb" style="left:274.8px;top:427.1px;width:8.4px;height:14.3px;background:#e5b561;"></div>
<div class="fb" style="left:284.1px;top:427.1px;width:8.1px;height:14.3px;background:#e8b864;"></div>
<div class="fb" style="left:292.9px;top:427.1px;width:6.3px;height:14.3px;background:#e9b965;"></div>
<div class="fb" style="left:299.9px;top:427.1px;width:6.0px;height:14.3px;background:#e7b763;"></div>
<div class="fb" style="left:306.7px;top:427.1px;width:6.0px;height:14.3px;background:#ecbc68;"></div>
<div class="fb" style="left:313.5px;top:427.1px;width:14.1px;height:14.3px;background:#e8d05a;"></div>
<div class="fb" style="left:328.4px;top:427.1px;width:4.8px;height:14.3px;background:#e4b460;"></div>
<div class="fb" style="left:333.9px;top:427.1px;width:5.5px;height:14.3px;background:#e5b561;"></div>
<div class="fb" style="left:340.1px;top:427.1px;width:9.4px;height:14.3px;background:#e5b561;"></div>
<div class="fb" style="left:350.3px;top:427.1px;width:4.3px;height:14.3px;background:#eaba66;"></div>
<div class="fb" style="left:355.3px;top:427.1px;width:4.1px;height:14.3px;background:#e5b561;"></div>
<div class="fb" style="left:360.1px;top:427.1px;width:7.2px;height:14.3px;background:#e8b864;"></div>
<div class="fb" style="left:221.8px;top:442.7px;width:145.6px;height:14.3px;background:#fcdcad;"></div>
<div class="fb" style="left:221.8px;top:442.7px;width:13.0px;height:14.3px;background:#fbb44c;"></div>
<div class="fb" style="left:235.8px;top:442.7px;width:9.2px;height:14.3px;background:#f6af47;"></div>
<div class="fb" style="left:246.0px;top:442.7px;width:5.6px;height:14.3px;background:#f5ae46;"></div>
<div class="fb" style="left:252.4px;top:442.7px;width:5.2px;height:14.3px;background:#f5ae46;"></div>
<div class="fb" style="left:258.4px;top:442.7px;width:7.3px;height:14.3px;background:#f8b149;"></div>
<div class="fb" style="left:266.7px;top:442.7px;width:7.1px;height:14.3px;background:#f8b149;"></div>
<div class="fb" style="left:274.9px;top:442.7px;width:8.2px;height:14.3px;background:#f5ae46;"></div>
<div class="fb" style="left:284.1px;top:442.7px;width:7.9px;height:14.3px;background:#fcb54d;"></div>
<div class="fb" style="left:292.9px;top:442.7px;width:6.2px;height:14.3px;background:#fbb44c;"></div>
<div class="fb" style="left:300.0px;top:442.7px;width:5.9px;height:14.3px;background:#fbb44c;"></div>
<div class="fb" style="left:306.8px;top:442.7px;width:5.9px;height:14.3px;background:#fbb44c;"></div>
<div class="fb" style="left:313.6px;top:442.7px;width:14.0px;height:14.3px;background:#ed9f4f;"></div>
<div class="fb" style="left:328.5px;top:442.7px;width:4.7px;height:14.3px;background:#f8b149;"></div>
<div class="fb" style="left:334.0px;top:442.7px;width:5.4px;height:14.3px;background:#f9b24a;"></div>
<div class="fb" style="left:340.2px;top:442.7px;width:9.3px;height:14.3px;background:#fab34b;"></div>
<div class="fb" style="left:350.3px;top:442.7px;width:4.2px;height:14.3px;background:#f6af47;"></div>
<div class="fb" style="left:355.3px;top:442.7px;width:4.0px;height:14.3px;background:#f9b24a;"></div>
<div class="fb" style="left:360.2px;top:442.7px;width:7.1px;height:14.3px;background:#fab34b;"></div>
<div class="fb" style="left:221.8px;top:458.3px;width:145.6px;height:14.3px;background:#fce9d3;"></div>
<div class="fb" style="left:221.8px;top:458.3px;width:12.9px;height:14.3px;background:#f2a64c;"></div>
<div class="fb" style="left:236.0px;top:458.3px;width:8.9px;height:14.3px;background:#f8ac52;"></div>
<div class="fb" style="left:246.1px;top:458.3px;width:5.4px;height:14.3px;background:#f3a74d;"></div>
<div class="fb" style="left:252.5px;top:458.3px;width:5.0px;height:14.3px;background:#f4a84e;"></div>
<div class="fb" style="left:258.5px;top:458.3px;width:7.1px;height:14.3px;background:#f5a94f;"></div>
<div class="fb" style="left:266.9px;top:458.3px;width:6.8px;height:14.3px;background:#f3a74d;"></div>
<div class="fb" style="left:275.1px;top:458.3px;width:7.9px;height:14.3px;background:#f2a64c;"></div>
<div class="fb" style="left:284.3px;top:458.3px;width:7.7px;height:14.3px;background:#f2a64c;"></div>
<div class="fb" style="left:293.0px;top:458.3px;width:6.0px;height:14.3px;background:#f9ad53;"></div>
<div class="fb" style="left:300.1px;top:458.3px;width:5.7px;height:14.3px;background:#f9ad53;"></div>
<div class="fb" style="left:306.9px;top:458.3px;width:5.7px;height:14.3px;background:#f4a84e;"></div>
<div class="fb" style="left:313.7px;top:458.3px;width:13.8px;height:14.3px;background:#faae54;"></div>
<div class="fb" style="left:328.6px;top:458.3px;width:4.5px;height:14.3px;background:#f5a94f;"></div>
<div class="fb" style="left:334.0px;top:458.3px;width:5.2px;height:14.3px;background:#f9ad53;"></div>
<div class="fb" style="left:340.3px;top:458.3px;width:9.2px;height:14.3px;background:#faae54;"></div>
<div class="fb" style="left:350.4px;top:458.3px;width:4.1px;height:14.3px;background:#f5a94f;"></div>
<div class="fb" style="left:355.3px;top:458.3px;width:3.9px;height:14.3px;background:#f4a84e;"></div>
<div class="fb" style="left:360.3px;top:458.3px;width:7.0px;height:14.3px;background:#f8ac52;"></div>
<div class="fb" style="left:221.8px;top:473.9px;width:145.6px;height:14.3px;background:#f9f4d5;"></div>
<div class="fb" style="left:221.9px;top:473.9px;width:12.6px;height:14.3px;background:#ecd65c;"></div>
<div class="fb" style="left:236.2px;top:473.9px;width:8.5px;height:14.3px;background:#e7d157;"></div>
<div class="fb" style="left:246.3px;top:473.9px;width:5.1px;height:14.3px;background:#ecd65c;"></div>
<div class="fb" style="left:252.6px;top:473.9px;width:4.8px;height:14.3px;background:#ecd65c;"></div>
<div class="fb" style="left:258.6px;top:473.9px;width:6.8px;height:14.3px;background:#e9d359;"></div>
<div class="fb" style="left:267.1px;top:473.9px;width:6.3px;height:14.3px;background:#e6d056;"></div>
<div class="fb" style="left:275.4px;top:473.9px;width:7.4px;height:14.3px;background:#ead45a;"></div>
<div class="fb" style="left:284.5px;top:473.9px;width:7.3px;height:14.3px;background:#ead45a;"></div>
<div class="fb" style="left:293.1px;top:473.9px;width:5.7px;height:14.3px;background:#e6d056;"></div>
<div class="fb" style="left:300.3px;top:473.9px;width:5.4px;height:14.3px;background:#e9d359;"></div>
<div class="fb" style="left:307.1px;top:473.9px;width:5.4px;height:14.3px;background:#e8d258;"></div>
<div class="fb" style="left:313.8px;top:473.9px;width:13.5px;height:14.3px;background:#ecd65c;"></div>
<div class="fb" style="left:328.7px;top:473.9px;width:4.3px;height:14.3px;background:#e7d157;"></div>
<div class="fb" style="left:334.1px;top:473.9px;width:5.0px;height:14.3px;background:#e6d056;"></div>
<div class="fb" style="left:340.4px;top:473.9px;width:9.0px;height:14.3px;background:#e8d258;"></div>
<div class="fb" style="left:350.5px;top:473.9px;width:3.9px;height:14.3px;background:#e9d359;"></div>
<div class="fb" style="left:355.4px;top:473.9px;width:3.7px;height:14.3px;background:#edd75d;"></div>
<div class="fb" style="left:360.5px;top:473.9px;width:6.7px;height:14.3px;background:#ead45a;"></div>
<div class="fb" style="left:221.8px;top:489.6px;width:145.6px;height:14.3px;background:#fdf4ea;"></div>
<div class="fb" style="left:221.9px;top:489.6px;width:12.3px;height:14.3px;background:#f1a44e;"></div>
<div class="fb" style="left:236.5px;top:489.6px;width:7.9px;height:14.3px;background:#f6a953;"></div>
<div class="fb" style="left:246.6px;top:489.6px;width:4.7px;height:14.3px;background:#f5a852;"></div>
<div class="fb" style="left:252.8px;top:489.6px;width:4.5px;height:14.3px;background:#f7aa54;"></div>
<div class="fb" style="left:258.8px;top:489.6px;width:6.4px;height:14.3px;background:#f2a54f;"></div>
<div class="fb" style="left:267.3px;top:489.6px;width:5.7px;height:14.3px;background:#f2a54f;"></div>
<div class="fb" style="left:275.8px;top:489.6px;width:6.7px;height:14.3px;background:#f2a54f;"></div>
<div class="fb" style="left:284.8px;top:489.6px;width:6.9px;height:14.3px;background:#f4a751;"></div>
<div class="fb" style="left:293.3px;top:489.6px;width:5.3px;height:14.3px;background:#f4a751;"></div>
<div class="fb" style="left:300.5px;top:489.6px;width:4.9px;height:14.3px;background:#f1a44e;"></div>
<div class="fb" style="left:307.3px;top:489.6px;width:5.0px;height:14.3px;background:#f6a953;"></div>
<div class="fb" style="left:314.0px;top:489.6px;width:13.1px;height:14.3px;background:#f6a953;"></div>
<div class="fb" style="left:328.9px;top:489.6px;width:4.0px;height:14.3px;background:#f8ab55;"></div>
<div class="fb" style="left:334.2px;top:489.6px;width:4.8px;height:14.3px;background:#f3a650;"></div>
<div class="fb" style="left:340.5px;top:489.6px;width:8.7px;height:14.3px;background:#f8ab55;"></div>
<div class="fb" style="left:350.6px;top:489.6px;width:3.7px;height:14.3px;background:#f3a650;"></div>
<div class="fb" style="left:355.5px;top:489.6px;width:3.4px;height:14.3px;background:#f7aa54;"></div>
<div class="fb" style="left:360.7px;top:489.6px;width:6.4px;height:14.3px;background:#f3a650;"></div>
<div class="fb" style="left:221.6px;top:505.2px;width:12.6px;height:14.3px;background:#e3a960;"></div>
<div class="fb" style="left:236.6px;top:505.2px;width:7.9px;height:14.3px;background:#e5ab62;"></div>
<div class="fb" style="left:246.6px;top:505.2px;width:4.9px;height:14.3px;background:#e4aa61;"></div>
<div class="fb" style="left:252.6px;top:505.2px;width:4.9px;height:14.3px;background:#e4aa61;"></div>
<div class="fb" style="left:258.6px;top:505.2px;width:6.6px;height:14.3px;background:#e4aa61;"></div>
<div class="fb" style="left:267.4px;top:505.2px;width:5.5px;height:14.3px;background:#e3a960;"></div>
<div class="fb" style="left:275.9px;top:505.2px;width:6.5px;height:14.3px;background:#e9af66;"></div>
<div class="fb" style="left:284.9px;top:505.2px;width:7.0px;height:14.3px;background:#e4aa61;"></div>
<div class="fb" style="left:293.2px;top:505.2px;width:5.6px;height:14.3px;background:#e7ad64;"></div>
<div class="fb" style="left:300.4px;top:505.2px;width:5.1px;height:14.3px;background:#e8ae65;"></div>
<div class="fb" style="left:307.2px;top:505.2px;width:5.2px;height:14.3px;background:#e2a85f;"></div>
<div class="fb" style="left:313.9px;top:505.2px;width:13.3px;height:14.3px;background:#faba4a;"></div>
<div class="fb" style="left:328.9px;top:505.2px;width:4.3px;height:14.3px;background:#e1a75e;"></div>
<div class="fb" style="left:333.9px;top:505.2px;width:5.2px;height:14.3px;background:#e2a85f;"></div>
<div class="fb" style="left:340.4px;top:505.2px;width:9.1px;height:14.3px;background:#e2a85f;"></div>
<div class="fb" style="left:350.4px;top:505.2px;width:4.3px;height:14.3px;background:#e1a75e;"></div>
<div class="fb" style="left:355.2px;top:505.2px;width:3.8px;height:14.3px;background:#e9af66;"></div>
<div class="fb" style="left:360.6px;top:505.2px;width:6.7px;height:14.3px;background:#e5ab62;"></div>
<div class="fb" style="left:221.7px;top:520.8px;width:12.4px;height:14.3px;background:#e7c751;"></div>
<div class="fb" style="left:236.7px;top:520.8px;width:7.7px;height:14.3px;background:#eaca54;"></div>
<div class="fb" style="left:246.7px;top:520.8px;width:4.7px;height:14.3px;background:#e8c852;"></div>
<div class="fb" style="left:252.7px;top:520.8px;width:4.7px;height:14.3px;background:#eaca54;"></div>
<div class="fb" style="left:258.7px;top:520.8px;width:6.4px;height:14.3px;background:#ebcb55;"></div>
<div class="fb" style="left:267.5px;top:520.8px;width:5.3px;height:14.3px;background:#e8c852;"></div>
<div class="fb" style="left:276.1px;top:520.8px;width:6.3px;height:14.3px;background:#eccc56;"></div>
<div class="fb" style="left:285.0px;top:520.8px;width:6.8px;height:14.3px;background:#e6c650;"></div>
<div class="fb" style="left:293.3px;top:520.8px;width:5.4px;height:14.3px;background:#e5c54f;"></div>
<div class="fb" style="left:300.5px;top:520.8px;width:4.9px;height:14.3px;background:#e6c650;"></div>
<div class="fb" style="left:307.4px;top:520.8px;width:5.0px;height:14.3px;background:#e7c751;"></div>
<div class="fb" style="left:314.0px;top:520.8px;width:13.1px;height:14.3px;background:#f8bb4b;"></div>
<div class="fb" style="left:329.0px;top:520.8px;width:4.1px;height:14.3px;background:#eccc56;"></div>
<div class="fb" style="left:334.1px;top:520.8px;width:5.0px;height:14.3px;background:#e5c54f;"></div>
<div class="fb" style="left:340.5px;top:520.8px;width:8.9px;height:14.3px;background:#e8c852;"></div>
<div class="fb" style="left:350.5px;top:520.8px;width:4.1px;height:14.3px;background:#e7c751;"></div>
<div class="fb" style="left:355.3px;top:520.8px;width:3.6px;height:14.3px;background:#e7c751;"></div>
<div class="fb" style="left:360.7px;top:520.8px;width:6.5px;height:14.3px;background:#e4c44e;"></div>
<div class="fb" style="left:221.8px;top:536.5px;width:12.2px;height:14.3px;background:#f5bf47;"></div>
<div class="fb" style="left:236.8px;top:536.5px;width:7.5px;height:14.3px;background:#f8c24a;"></div>
<div class="fb" style="left:246.8px;top:536.5px;width:4.5px;height:14.3px;background:#fac44c;"></div>
<div class="fb" style="left:252.8px;top:536.5px;width:4.5px;height:14.3px;background:#fbc54d;"></div>
<div class="fb" style="left:258.8px;top:536.5px;width:6.2px;height:14.3px;background:#f7c149;"></div>
<div class="fb" style="left:267.6px;top:536.5px;width:5.1px;height:14.3px;background:#f4be46;"></div>
<div class="fb" style="left:276.1px;top:536.5px;width:6.1px;height:14.3px;background:#f4be46;"></div>
<div class="fb" style="left:285.1px;top:536.5px;width:6.6px;height:14.3px;background:#f6c048;"></div>
<div class="fb" style="left:293.4px;top:536.5px;width:5.2px;height:14.3px;background:#f8c24a;"></div>
<div class="fb" style="left:300.6px;top:536.5px;width:4.7px;height:14.3px;background:#f9c34b;"></div>
<div class="fb" style="left:307.4px;top:536.5px;width:4.8px;height:14.3px;background:#fcc64e;"></div>
<div class="fb" style="left:314.1px;top:536.5px;width:12.9px;height:14.3px;background:#e4ce58;"></div>
<div class="fb" style="left:329.1px;top:536.5px;width:3.9px;height:14.3px;background:#f5bf47;"></div>
<div class="fb" style="left:334.1px;top:536.5px;width:4.8px;height:14.3px;background:#f9c34b;"></div>
<div class="fb" style="left:340.6px;top:536.5px;width:8.7px;height:14.3px;background:#f6c048;"></div>
<div class="fb" style="left:350.6px;top:536.5px;width:3.9px;height:14.3px;background:#fbc54d;"></div>
<div class="fb" style="left:355.4px;top:536.5px;width:3.4px;height:14.3px;background:#f9c34b;"></div>
<div class="fb" style="left:360.8px;top:536.5px;width:6.3px;height:14.3px;background:#fcc64e;"></div>
<div class="fb" style="left:221.9px;top:552.1px;width:12.0px;height:14.3px;background:#f09e50;"></div>
<div class="fb" style="left:236.9px;top:552.1px;width:7.3px;height:14.3px;background:#ee9c4e;"></div>
<div class="fb" style="left:246.9px;top:552.1px;width:4.3px;height:14.3px;background:#ee9c4e;"></div>
<div class="fb" style="left:252.9px;top:552.1px;width:4.3px;height:14.3px;background:#f5a355;"></div>
<div class="fb" style="left:258.9px;top:552.1px;width:6.0px;height:14.3px;background:#f3a153;"></div>
<div class="fb" style="left:267.7px;top:552.1px;width:4.9px;height:14.3px;background:#f2a052;"></div>
<div class="fb" style="left:276.2px;top:552.1px;width:5.9px;height:14.3px;background:#ee9c4e;"></div>
<div class="fb" style="left:285.2px;top:552.1px;width:6.4px;height:14.3px;background:#ee9c4e;"></div>
<div class="fb" style="left:293.5px;top:552.1px;width:5.0px;height:14.3px;background:#ef9d4f;"></div>
<div class="fb" style="left:300.7px;top:552.1px;width:4.5px;height:14.3px;background:#f5a355;"></div>
<div class="fb" style="left:307.6px;top:552.1px;width:4.6px;height:14.3px;background:#ef9d4f;"></div>
<div class="fb" style="left:314.2px;top:552.1px;width:12.7px;height:14.3px;background:#f2a052;"></div>
<div class="fb" style="left:329.2px;top:552.1px;width:3.7px;height:14.3px;background:#f3a153;"></div>
<div class="fb" style="left:334.2px;top:552.1px;width:4.6px;height:14.3px;background:#f09e50;"></div>
<div class="fb" style="left:340.7px;top:552.1px;width:8.5px;height:14.3px;background:#ef9d4f;"></div>
<div class="fb" style="left:350.7px;top:552.1px;width:3.7px;height:14.3px;background:#ef9d4f;"></div>
<div class="fb" style="left:355.5px;top:552.1px;width:3.2px;height:14.3px;background:#f5a355;"></div>
<div class="fb" style="left:360.9px;top:552.1px;width:6.1px;height:14.3px;background:#f6a456;"></div>
<div class="fb" style="left:221.8px;top:567.7px;width:12.1px;height:14.3px;background:#f2a254;"></div>
<div class="fb" style="left:225.1px;top:567.7px;width:0.6px;height:14.3px;background:#f8c490;"></div>
<div class="fb" style="left:231.0px;top:567.7px;width:0.6px;height:14.3px;background:#f8c490;"></div>
<div class="fb" style="left:229.7px;top:567.7px;width:0.6px;height:14.3px;background:#f8c490;"></div>
<div class="fb" style="left:236.8px;top:567.7px;width:7.4px;height:14.3px;background:#ef9f51;"></div>
<div class="fb" style="left:240.1px;top:567.7px;width:0.6px;height:14.3px;background:#f8c490;"></div>
<div class="fb" style="left:241.4px;top:567.7px;width:0.6px;height:14.3px;background:#f8c490;"></div>
<div class="fb" style="left:246.8px;top:567.7px;width:4.4px;height:14.3px;background:#ee9e50;"></div>
<div class="fb" style="left:250.2px;top:567.7px;width:0.6px;height:14.3px;background:#f8c490;"></div>
<div class="fb" style="left:248.0px;top:567.7px;width:0.6px;height:14.3px;background:#f8c490;"></div>
<div class="fb" style="left:252.8px;top:567.7px;width:4.4px;height:14.3px;background:#f4a456;"></div>
<div class="fb" style="left:258.8px;top:567.7px;width:6.1px;height:14.3px;background:#f6a658;"></div>
<div class="fb" style="left:261.6px;top:567.7px;width:0.6px;height:14.3px;background:#f8c490;"></div>
<div class="fb" style="left:260.4px;top:567.7px;width:0.6px;height:14.3px;background:#f8c490;"></div>
<div class="fb" style="left:267.6px;top:567.7px;width:5.0px;height:14.3px;background:#ee9e50;"></div>
<div class="fb" style="left:276.2px;top:567.7px;width:6.0px;height:14.3px;background:#ee9e50;"></div>
<div class="fb" style="left:285.1px;top:567.7px;width:6.5px;height:14.3px;background:#f1a153;"></div>
<div class="fb" style="left:289.3px;top:567.7px;width:0.6px;height:14.3px;background:#f8c490;"></div>
<div class="fb" style="left:288.1px;top:567.7px;width:0.6px;height:14.3px;background:#f8c490;"></div>
<div class="fb" style="left:293.4px;top:567.7px;width:5.1px;height:14.3px;background:#f6a658;"></div>
<div class="fb" style="left:295.9px;top:567.7px;width:0.6px;height:14.3px;background:#f8c490;"></div>
<div class="fb" style="left:297.0px;top:567.7px;width:0.6px;height:14.3px;background:#f8c490;"></div>
<div class="fb" style="left:300.6px;top:567.7px;width:4.6px;height:14.3px;background:#ee9e50;"></div>
<div class="fb" style="left:307.5px;top:567.7px;width:4.7px;height:14.3px;background:#f1a153;"></div>
<div class="fb" style="left:314.1px;top:567.7px;width:12.8px;height:14.3px;background:#f4a456;"></div>
<div class="fb" style="left:318.9px;top:567.7px;width:0.6px;height:14.3px;background:#f8c490;"></div>
<div class="fb" style="left:329.1px;top:567.7px;width:3.8px;height:14.3px;background:#ee9e50;"></div>
<div class="fb" style="left:331.7px;top:567.7px;width:0.6px;height:14.3px;background:#f8c490;"></div>
<div class="fb" style="left:331.4px;top:567.7px;width:0.6px;height:14.3px;background:#f8c490;"></div>
<div class="fb" style="left:334.2px;top:567.7px;width:4.7px;height:14.3px;background:#f4a456;"></div>
<div class="fb" style="left:337.7px;top:567.7px;width:0.6px;height:14.3px;background:#f8c490;"></div>
<div class="fb" style="left:340.6px;top:567.7px;width:8.6px;height:14.3px;background:#f2a254;"></div>
<div class="fb" style="left:343.4px;top:567.7px;width:0.6px;height:14.3px;background:#f8c490;"></div>
<div class="fb" style="left:345.6px;top:567.7px;width:0.6px;height:14.3px;background:#f8c490;"></div>
<div class="fb" style="left:350.6px;top:567.7px;width:3.8px;height:14.3px;background:#f5a557;"></div>
<div class="fb" style="left:353.1px;top:567.7px;width:0.6px;height:14.3px;background:#f8c490;"></div>
<div class="fb" style="left:355.4px;top:567.7px;width:3.3px;height:14.3px;background:#f2a254;"></div>
<div class="fb" style="left:357.1px;top:567.7px;width:0.6px;height:14.3px;background:#f8c490;"></div>
<div class="fb" style="left:356.7px;top:567.7px;width:0.6px;height:14.3px;background:#f8c490;"></div>
<div class="fb" style="left:360.8px;top:567.7px;width:6.2px;height:14.3px;background:#f3a355;"></div>
<div class="fb" style="left:363.0px;top:567.7px;width:0.6px;height:14.3px;background:#f8c490;"></div>
<div class="fb" style="left:221.9px;top:583.3px;width:12.0px;height:14.3px;background:#f4a75d;"></div>
<div class="fb" style="left:230.7px;top:583.3px;width:0.6px;height:14.3px;background:#fad6ac;"></div>
<div class="fb" style="left:236.9px;top:583.3px;width:7.3px;height:14.3px;background:#f4a75d;"></div>
<div class="fb" style="left:241.0px;top:583.3px;width:0.6px;height:14.3px;background:#fad6ac;"></div>
<div class="fb" style="left:246.9px;top:583.3px;width:4.3px;height:14.3px;background:#f3a65c;"></div>
<div class="fb" style="left:248.3px;top:583.3px;width:0.6px;height:14.3px;background:#fad6ac;"></div>
<div class="fb" style="left:252.9px;top:583.3px;width:4.3px;height:14.3px;background:#f5a85e;"></div>
<div class="fb" style="left:255.9px;top:583.3px;width:0.6px;height:14.3px;background:#fad6ac;"></div>
<div class="fb" style="left:258.9px;top:583.3px;width:6.0px;height:14.3px;background:#eea157;"></div>
<div class="fb" style="left:267.7px;top:583.3px;width:4.9px;height:14.3px;background:#f2a55b;"></div>
<div class="fb" style="left:269.2px;top:583.3px;width:0.6px;height:14.3px;background:#fad6ac;"></div>
<div class="fb" style="left:276.3px;top:583.3px;width:5.9px;height:14.3px;background:#f5a85e;"></div>
<div class="fb" style="left:280.7px;top:583.3px;width:0.6px;height:14.3px;background:#fad6ac;"></div>
<div class="fb" style="left:285.2px;top:583.3px;width:6.4px;height:14.3px;background:#f4a75d;"></div>
<div class="fb" style="left:288.9px;top:583.3px;width:0.6px;height:14.3px;background:#fad6ac;"></div>
<div class="fb" style="left:288.5px;top:583.3px;width:0.6px;height:14.3px;background:#fad6ac;"></div>
<div class="fb" style="left:293.5px;top:583.3px;width:5.0px;height:14.3px;background:#f3a65c;"></div>
<div class="fb" style="left:295.6px;top:583.3px;width:0.6px;height:14.3px;background:#fad6ac;"></div>
<div class="fb" style="left:297.0px;top:583.3px;width:0.6px;height:14.3px;background:#fad6ac;"></div>
<div class="fb" style="left:300.7px;top:583.3px;width:4.5px;height:14.3px;background:#f2a55b;"></div>
<div class="fb" style="left:307.6px;top:583.3px;width:4.6px;height:14.3px;background:#f8ab61;"></div>
<div class="fb" style="left:310.1px;top:583.3px;width:0.6px;height:14.3px;background:#fad6ac;"></div>
<div class="fb" style="left:316.8px;top:583.3px;width:10.1px;height:14.3px;background:#f2a55b;"></div>
<div class="fb" style="left:323.7px;top:583.3px;width:0.6px;height:14.3px;background:#fad6ac;"></div>
<div class="fb" style="left:319.4px;top:583.3px;width:0.6px;height:14.3px;background:#fad6ac;"></div>
<div class="fb" style="left:320.0px;top:583.3px;width:0.6px;height:14.3px;background:#fad6ac;"></div>
<div class="fb" style="left:329.2px;top:583.3px;width:3.7px;height:14.3px;background:#f5a85e;"></div>
<div class="fb" style="left:330.1px;top:583.3px;width:0.6px;height:14.3px;background:#fad6ac;"></div>
<div class="fb" style="left:334.3px;top:583.3px;width:4.6px;height:14.3px;background:#f2a55b;"></div>
<div class="fb" style="left:337.4px;top:583.3px;width:0.6px;height:14.3px;background:#fad6ac;"></div>
<div class="fb" style="left:340.7px;top:583.3px;width:8.5px;height:14.3px;background:#eea157;"></div>
<div class="fb" style="left:343.3px;top:583.3px;width:0.6px;height:14.3px;background:#fad6ac;"></div>
<div class="fb" style="left:343.3px;top:583.3px;width:0.6px;height:14.3px;background:#fad6ac;"></div>
<div class="fb" style="left:345.3px;top:583.3px;width:0.6px;height:14.3px;background:#fad6ac;"></div>
<div class="fb" style="left:350.7px;top:583.3px;width:3.7px;height:14.3px;background:#f8ab61;"></div>
<div class="fb" style="left:353.5px;top:583.3px;width:0.6px;height:14.3px;background:#fad6ac;"></div>
<div class="fb" style="left:355.5px;top:583.3px;width:3.2px;height:14.3px;background:#f8ab61;"></div>
<div class="fb" style="left:356.6px;top:583.3px;width:0.6px;height:14.3px;background:#fad6ac;"></div>
<div class="fb" style="left:360.9px;top:583.3px;width:6.1px;height:14.3px;background:#f5a85e;"></div>
<div class="fb" style="left:363.0px;top:583.3px;width:0.6px;height:14.3px;background:#fad6ac;"></div>
<div class="fb" style="left:221.9px;top:599.0px;width:11.9px;height:14.3px;background:#f6c08c;"></div>
<div class="fb" style="left:223.5px;top:599.0px;width:1.0px;height:14.3px;background:#f0a256;"></div>
<div class="fb" style="left:225.1px;top:599.0px;width:2.0px;height:14.3px;background:#f4a65a;"></div>
<div class="fb" style="left:227.7px;top:599.0px;width:1.5px;height:14.3px;background:#f8aa5e;"></div>
<div class="fb" style="left:229.8px;top:599.0px;width:1.5px;height:14.3px;background:#f7a95d;"></div>
<div class="fb" style="left:231.9px;top:599.0px;width:1.9px;height:14.3px;background:#f3a559;"></div>
<div class="fb" style="left:236.9px;top:599.0px;width:7.2px;height:14.3px;background:#f6c08c;"></div>
<div class="fb" style="left:239.0px;top:599.0px;width:1.0px;height:14.3px;background:#f5a75b;"></div>
<div class="fb" style="left:240.6px;top:599.0px;width:2.0px;height:14.3px;background:#f6a85c;"></div>
<div class="fb" style="left:243.2px;top:599.0px;width:0.9px;height:14.3px;background:#f8aa5e;"></div>
<div class="fb" style="left:246.9px;top:599.0px;width:4.2px;height:14.3px;background:#f6c08c;"></div>
<div class="fb" style="left:246.9px;top:599.0px;width:1.0px;height:14.3px;background:#f2a458;"></div>
<div class="fb" style="left:250.1px;top:599.0px;width:1.0px;height:14.3px;background:#f7a95d;"></div>
<div class="fb" style="left:252.9px;top:599.0px;width:4.2px;height:14.3px;background:#f6c08c;"></div>
<div class="fb" style="left:252.9px;top:599.0px;width:1.0px;height:14.3px;background:#ed9f53;"></div>
<div class="fb" style="left:254.5px;top:599.0px;width:1.0px;height:14.3px;background:#f4a65a;"></div>
<div class="fb" style="left:258.9px;top:599.0px;width:5.9px;height:14.3px;background:#f6c08c;"></div>
<div class="fb" style="left:267.7px;top:599.0px;width:4.8px;height:14.3px;background:#f6c08c;"></div>
<div class="fb" style="left:267.7px;top:599.0px;width:1.0px;height:14.3px;background:#ec9e52;"></div>
<div class="fb" style="left:269.3px;top:599.0px;width:1.5px;height:14.3px;background:#f6a85c;"></div>
<div class="fb" style="left:271.4px;top:599.0px;width:1.1px;height:14.3px;background:#f4a65a;"></div>
<div class="fb" style="left:276.3px;top:599.0px;width:5.8px;height:14.3px;background:#f6c08c;"></div>
<div class="fb" style="left:279.5px;top:599.0px;width:0.6px;height:14.3px;background:#fdeedd;"></div>
<div class="fb" style="left:285.2px;top:599.0px;width:6.3px;height:14.3px;background:#f6c08c;"></div>
<div class="fb" style="left:286.8px;top:599.0px;width:2.6px;height:14.3px;background:#f0a256;"></div>
<div class="fb" style="left:290.0px;top:599.0px;width:1.5px;height:14.3px;background:#f4a65a;"></div>
<div class="fb" style="left:293.5px;top:599.0px;width:4.9px;height:14.3px;background:#f6c08c;"></div>
<div class="fb" style="left:293.5px;top:599.0px;width:2.0px;height:14.3px;background:#f2a458;"></div>
<div class="fb" style="left:296.1px;top:599.0px;width:1.5px;height:14.3px;background:#eea054;"></div>
<div class="fb" style="left:300.7px;top:599.0px;width:4.4px;height:14.3px;background:#f6c08c;"></div>
<div class="fb" style="left:300.7px;top:599.0px;width:0.6px;height:14.3px;background:#fdeedd;"></div>
<div class="fb" style="left:303.3px;top:599.0px;width:1.5px;height:14.3px;background:#ed9f53;"></div>
<div class="fb" style="left:307.6px;top:599.0px;width:4.5px;height:14.3px;background:#f6c08c;"></div>
<div class="fb" style="left:307.6px;top:599.0px;width:0.6px;height:14.3px;background:#fdeedd;"></div>
<div class="fb" style="left:309.2px;top:599.0px;width:1.0px;height:14.3px;background:#ec9e52;"></div>
<div class="fb" style="left:310.8px;top:599.0px;width:1.3px;height:14.3px;background:#f5a75b;"></div>
<div class="fb" style="left:316.8px;top:599.0px;width:10.0px;height:14.3px;background:#f8d060;"></div>
<div class="fb" style="left:316.8px;top:599.0px;width:1.0px;height:14.3px;background:#fbc545;"></div>
<div class="fb" style="left:318.4px;top:599.0px;width:1.5px;height:14.3px;background:#f8c242;"></div>
<div class="fb" style="left:320.5px;top:599.0px;width:2.6px;height:14.3px;background:#fcc646;"></div>
<div class="fb" style="left:323.7px;top:599.0px;width:2.6px;height:14.3px;background:#f7c141;"></div>
<div class="fb" style="left:329.2px;top:599.0px;width:3.6px;height:14.3px;background:#f6c08c;"></div>
<div class="fb" style="left:329.2px;top:599.0px;width:2.6px;height:14.3px;background:#f2a458;"></div>
<div class="fb" style="left:334.3px;top:599.0px;width:4.5px;height:14.3px;background:#f6c08c;"></div>
<div class="fb" style="left:334.3px;top:599.0px;width:2.6px;height:14.3px;background:#ed9f53;"></div>
<div class="fb" style="left:337.5px;top:599.0px;width:1.3px;height:14.3px;background:#ec9e52;"></div>
<div class="fb" style="left:340.7px;top:599.0px;width:8.4px;height:14.3px;background:#f6c08c;"></div>
<div class="fb" style="left:340.7px;top:599.0px;width:2.0px;height:14.3px;background:#f8aa5e;"></div>
<div class="fb" style="left:343.3px;top:599.0px;width:1.0px;height:14.3px;background:#eea054;"></div>
<div class="fb" style="left:344.9px;top:599.0px;width:1.5px;height:14.3px;background:#f0a256;"></div>
<div class="fb" style="left:350.7px;top:599.0px;width:3.6px;height:14.3px;background:#f6c08c;"></div>
<div class="fb" style="left:350.7px;top:599.0px;width:0.6px;height:14.3px;background:#fdeedd;"></div>
<div class="fb" style="left:352.8px;top:599.0px;width:1.0px;height:14.3px;background:#f5a75b;"></div>
<div class="fb" style="left:355.5px;top:599.0px;width:3.1px;height:14.3px;background:#f6c08c;"></div>
<div class="fb" style="left:360.9px;top:599.0px;width:6.0px;height:14.3px;background:#f6c08c;"></div>
<div class="fb" style="left:360.9px;top:599.0px;width:2.6px;height:14.3px;background:#f6a85c;"></div>
<div class="fb" style="left:222.0px;top:614.6px;width:11.8px;height:7.4px;background:#f8d2a2;"></div>
<div class="fb" style="left:222.0px;top:614.6px;width:0.6px;height:7.4px;background:#fdeedd;"></div>
<div class="fb" style="left:224.1px;top:614.6px;width:0.6px;height:7.4px;background:#fdeedd;"></div>
<div class="fb" style="left:226.2px;top:614.6px;width:1.5px;height:7.4px;background:#f7a95d;"></div>
<div class="fb" style="left:230.9px;top:614.6px;width:0.6px;height:7.4px;background:#fdeedd;"></div>
<div class="fb" style="left:237.0px;top:614.6px;width:7.1px;height:7.4px;background:#f8d2a2;"></div>
<div class="fb" style="left:237.0px;top:614.6px;width:1.5px;height:7.4px;background:#efa155;"></div>
<div class="fb" style="left:243.3px;top:614.6px;width:0.8px;height:7.4px;background:#f2a458;"></div>
<div class="fb" style="left:247.0px;top:614.6px;width:4.1px;height:7.4px;background:#f8d2a2;"></div>
<div class="fb" style="left:247.0px;top:614.6px;width:0.6px;height:7.4px;background:#fdeedd;"></div>
<div class="fb" style="left:250.2px;top:614.6px;width:0.9px;height:7.4px;background:#f6a85c;"></div>
<div class="fb" style="left:253.0px;top:614.6px;width:4.1px;height:7.4px;background:#f8d2a2;"></div>
<div class="fb" style="left:253.0px;top:614.6px;width:1.0px;height:7.4px;background:#f5a75b;"></div>
<div class="fb" style="left:254.6px;top:614.6px;width:2.0px;height:7.4px;background:#f4a65a;"></div>
<div class="fb" style="left:259.0px;top:614.6px;width:5.8px;height:7.4px;background:#f8d2a2;"></div>
<div class="fb" style="left:259.0px;top:614.6px;width:0.6px;height:7.4px;background:#fdeedd;"></div>
<div class="fb" style="left:263.7px;top:614.6px;width:1.1px;height:7.4px;background:#ec9e52;"></div>
<div class="fb" style="left:267.8px;top:614.6px;width:4.7px;height:7.4px;background:#f8d2a2;"></div>
<div class="fb" style="left:267.8px;top:614.6px;width:2.6px;height:7.4px;background:#f6dc70;"></div>
<div class="fb" style="left:276.4px;top:614.6px;width:5.7px;height:7.4px;background:#f8d2a2;"></div>
<div class="fb" style="left:279.0px;top:614.6px;width:0.6px;height:7.4px;background:#fdeedd;"></div>
<div class="fb" style="left:285.3px;top:614.6px;width:6.2px;height:7.4px;background:#f8d2a2;"></div>
<div class="fb" style="left:285.3px;top:614.6px;width:2.6px;height:7.4px;background:#ed9f53;"></div>
<div class="fb" style="left:288.5px;top:614.6px;width:2.6px;height:7.4px;background:#f1a357;"></div>
<div class="fb" style="left:293.6px;top:614.6px;width:4.8px;height:7.4px;background:#f8d2a2;"></div>
<div class="fb" style="left:293.6px;top:614.6px;width:2.0px;height:7.4px;background:#f6dc70;"></div>
<div class="fb" style="left:296.2px;top:614.6px;width:1.5px;height:7.4px;background:#f3a559;"></div>
<div class="fb" style="left:300.8px;top:614.6px;width:4.3px;height:7.4px;background:#f8d2a2;"></div>
<div class="fb" style="left:300.8px;top:614.6px;width:2.0px;height:7.4px;background:#efa155;"></div>
<div class="fb" style="left:303.4px;top:614.6px;width:0.6px;height:7.4px;background:#fdeedd;"></div>
<div class="fb" style="left:307.7px;top:614.6px;width:4.4px;height:7.4px;background:#f8d2a2;"></div>
<div class="fb" style="left:307.7px;top:614.6px;width:1.0px;height:7.4px;background:#ed9f53;"></div>
<div class="fb" style="left:309.3px;top:614.6px;width:0.6px;height:7.4px;background:#fdeedd;"></div>
<div class="fb" style="left:316.9px;top:614.6px;width:9.9px;height:7.4px;background:#f8d060;"></div>
<div class="fb" style="left:316.9px;top:614.6px;width:0.6px;height:7.4px;background:#fdeedd;"></div>
<div class="fb" style="left:321.6px;top:614.6px;width:2.0px;height:7.4px;background:#f1bb3b;"></div>
<div class="fb" style="left:329.3px;top:614.6px;width:3.5px;height:7.4px;background:#f8d2a2;"></div>
<div class="fb" style="left:329.3px;top:614.6px;width:2.6px;height:7.4px;background:#f1a357;"></div>
<div class="fb" style="left:334.4px;top:614.6px;width:4.4px;height:7.4px;background:#f8d2a2;"></div>
<div class="fb" style="left:337.0px;top:614.6px;width:1.5px;height:7.4px;background:#f6dc70;"></div>
<div class="fb" style="left:340.8px;top:614.6px;width:8.3px;height:7.4px;background:#f8d2a2;"></div>
<div class="fb" style="left:340.8px;top:614.6px;width:2.0px;height:7.4px;background:#f6dc70;"></div>
<div class="fb" style="left:346.0px;top:614.6px;width:1.0px;height:7.4px;background:#f6a85c;"></div>
<div class="fb" style="left:350.8px;top:614.6px;width:3.5px;height:7.4px;background:#f8d2a2;"></div>
<div class="fb" style="left:350.8px;top:614.6px;width:0.6px;height:7.4px;background:#fdeedd;"></div>
<div class="fb" style="left:352.9px;top:614.6px;width:0.6px;height:7.4px;background:#fdeedd;"></div>
<div class="fb" style="left:355.6px;top:614.6px;width:3.0px;height:7.4px;background:#f8d2a2;"></div>
<div class="fb" style="left:361.0px;top:614.6px;width:5.9px;height:7.4px;background:#f8d2a2;"></div>
<div class="fb" style="left:362.6px;top:614.6px;width:1.0px;height:7.4px;background:#ed9f53;"></div>
<div class="fb" style="left:364.2px;top:614.6px;width:2.0px;height:7.4px;background:#f6dc70;"></div>
<div class="fb" style="left:422.0px;top:192.7px;width:415.6px;height:14.3px;background:#f6b35a;padding-left:4.2px">Motion [mount]</div>
<div class="fb" style="left:422.4px;top:208.3px;width:415.2px;height:14.3px;background:#e6c368;padding-left:4.2px">View [mount]</div>
<div class="fb" style="left:424.2px;top:223.9px;width:413.4px;height:14.3px;background:#e7c46a;padding-left:4.2px">View [mount]</div>
<div class="fb" style="left:425.4px;top:239.6px;width:412.2px;height:14.3px;background:#eda263;padding-left:4.2px">ScribePropsContainer [mount]</div>
<div class="fb" style="left:426.2px;top:255.2px;width:411.4px;height:14.3px;background:#f2b955;padding-left:4.4px">Connect(TimelineContainer) [mount]</div>
<div class="fb" style="left:426.6px;top:270.8px;width:411.0px;height:14.3px;background:#f2e060;padding-left:4.4px">TimelineContainer [mount]</div>
<div class="fb" style="left:427.6px;top:286.4px;width:410.0px;height:14.3px;background:#fbb850;padding-left:4.4px">Timeline [mount]</div>
<div class="fb" style="left:428.0px;top:302.1px;width:4.6px;height:14.3px;background:#cfa548;"></div>
<div class="fb" style="left:433.2px;top:302.1px;width:404.4px;height:14.3px;background:#e6c46c;padding-left:4.4px">View [mount]</div>
<div class="fb" style="left:434.0px;top:317.7px;width:403.6px;height:14.3px;background:#e7c56c;padding-left:4.4px">View [mount]</div>
<div class="fb" style="left:435.4px;top:333.3px;width:402.2px;height:14.3px;background:#fbb052;padding-left:4.4px">VirtualScroller [mount]</div>
<div class="fb" style="left:437.2px;top:348.9px;width:400.4px;height:14.3px;background:#f6b856;padding-left:5.6px">AnchorRenderer [mount]</div>
<div class="fb" style="left:438.0px;top:364.6px;width:4.4px;height:14.3px;background:#f0a050;"></div>
<div class="fb" style="left:443.8px;top:364.6px;width:393.8px;height:14.3px;background:#f0df62;padding-left:5.6px">OnDemandRenderer [mount]</div>
<div class="fb" style="left:445.2px;top:380.2px;width:392.4px;height:14.3px;background:#e8b060;padding-left:5.6px">ViewRenderer [mount]</div>
<div class="fb" style="left:447.8px;top:395.8px;width:389.8px;height:14.3px;background:#efc25a;padding-left:5.6px">View [mount]</div>
<div class="fb" style="left:452.0px;top:411.4px;width:27.6px;height:14.3px;background:#e8b766;padding-left:3.3px">N…]</div>
<div class="fb" style="left:483.3px;top:411.4px;width:34.9px;height:14.3px;background:#e8b766;padding-left:3.3px">No…]</div>
<div class="fb" style="left:520.3px;top:411.4px;width:26.3px;height:14.3px;background:#e8b766;padding-left:3.3px">N…]</div>
<div class="fb" style="left:549.2px;top:411.4px;width:49.0px;height:14.3px;background:#e8b766;padding-left:3.3px">Noti…nt]</div>
<div class="fb" style="left:600.6px;top:411.4px;width:98.7px;height:14.3px;background:#e8b766;padding-left:3.3px">Notificat… [mount]</div>
<div class="fb" style="left:701.8px;top:411.4px;width:75.5px;height:14.3px;background:#e8b766;padding-left:3.3px">Notifi…ount]</div>
<div class="fb" style="left:779.3px;top:411.4px;width:57.5px;height:14.3px;background:#e8b766;padding-left:3.3px">Noti…unt]</div>
<div class="fb" style="left:453.4px;top:427.1px;width:28.6px;height:14.3px;background:#e6c268;padding-left:3.3px">V…]</div>
<div class="fb" style="left:486.4px;top:427.1px;width:31.6px;height:14.3px;background:#e6c268;padding-left:3.3px">Vi…]</div>
<div class="fb" style="left:522.5px;top:427.1px;width:24.1px;height:14.3px;background:#e6c268;padding-left:3.3px">V…</div>
<div class="fb" style="left:550.4px;top:427.1px;width:47.6px;height:14.3px;background:#e6c268;padding-left:3.3px">Vie…nt]</div>
<div class="fb" style="left:601.8px;top:427.1px;width:97.2px;height:14.3px;background:#e6c268;padding-left:3.3px">View [mount]</div>
<div class="fb" style="left:703.4px;top:427.1px;width:73.6px;height:14.3px;background:#e6c268;padding-left:3.3px">View [mount]</div>
<div class="fb" style="left:780.0px;top:427.1px;width:56.8px;height:14.3px;background:#e6c268;padding-left:3.3px">View…nt]</div>
<div class="fb" style="left:455.8px;top:442.7px;width:26.2px;height:14.3px;background:#f0e05c;padding-left:3.3px">G…]</div>
<div class="fb" style="left:487.3px;top:442.7px;width:30.7px;height:14.3px;background:#f0e05c;padding-left:3.3px">Gr…]</div>
<div class="fb" style="left:523.0px;top:442.7px;width:23.6px;height:14.3px;background:#f0e05c;padding-left:3.3px">G…</div>
<div class="fb" style="left:551.7px;top:442.7px;width:46.3px;height:14.3px;background:#f0e05c;padding-left:3.3px">Gri…nt]</div>
<div class="fb" style="left:602.6px;top:442.7px;width:96.4px;height:14.3px;background:#f0e05c;padding-left:3.3px">ScribeNa…[mount]</div>
<div class="fb" style="left:703.5px;top:442.7px;width:1.1px;height:14.3px;background:#f9b450;"></div>
<div class="fb" style="left:705.4px;top:442.7px;width:71.6px;height:14.3px;background:#f0e05c;padding-left:3.3px">Scribe…ount]</div>
<div class="fb" style="left:780.5px;top:442.7px;width:56.3px;height:14.3px;background:#f0e05c;padding-left:3.3px">Scri…unt]</div>
<div class="fb" style="left:456.4px;top:458.3px;width:25.6px;height:14.3px;background:#e6c268;padding-left:3.3px">V…]</div>
<div class="fb" style="left:488.0px;top:458.3px;width:30.0px;height:14.3px;background:#e6c268;padding-left:3.3px">Vi…]</div>
<div class="fb" style="left:523.4px;top:458.3px;width:23.2px;height:14.3px;background:#e6c268;padding-left:3.3px">V…</div>
<div class="fb" style="left:552.6px;top:458.3px;width:45.4px;height:14.3px;background:#e6c268;padding-left:3.3px">Vie…nt]</div>
<div class="fb" style="left:603.0px;top:458.3px;width:96.0px;height:14.3px;background:#f9b450;padding-left:3.3px">ScribePr…[mount]</div>
<div class="fb" style="left:706.4px;top:458.3px;width:70.6px;height:14.3px;background:#f9b450;padding-left:3.3px">Scribe…ount]</div>
<div class="fb" style="left:781.4px;top:458.3px;width:55.4px;height:14.3px;background:#f9b450;padding-left:3.3px">Scri…unt]</div>
<div class="fb" style="left:457.4px;top:473.9px;width:24.8px;height:14.3px;background:#e6c268;"></div>
<div class="fb" style="left:489.2px;top:473.9px;width:2.4px;height:14.3px;background:#f0d890;"></div>
<div class="fb" style="left:492.2px;top:473.9px;width:26.0px;height:14.3px;background:#e6c268;padding-left:3.3px">V…]</div>
<div class="fb" style="left:524.0px;top:473.9px;width:22.9px;height:14.3px;background:#e6c268;"></div>
<div class="fb" style="left:553.2px;top:473.9px;width:2.6px;height:14.3px;background:#f0d890;"></div>
<div class="fb" style="left:556.4px;top:473.9px;width:42.4px;height:14.3px;background:#e6c268;padding-left:3.3px">Vie…t]</div>
<div class="fb" style="left:603.0px;top:473.9px;width:96.0px;height:14.3px;background:#ee9f62;padding-left:3.3px">ScribePr…[mount]</div>
<div class="fb" style="left:707.4px;top:473.9px;width:69.6px;height:14.3px;background:#ee9f62;padding-left:3.3px">Scrib…ount]</div>
<div class="fb" style="left:781.4px;top:473.9px;width:55.4px;height:14.3px;background:#ee9f62;padding-left:3.3px">Scri…unt]</div>
<div class="fb" style="left:458.9px;top:489.6px;width:10.7px;height:14.3px;background:#e6c268;"></div>
<div class="fb" style="left:470.4px;top:489.6px;width:6.2px;height:14.3px;background:#e4c86c;"></div>
<div class="fb" style="left:477.4px;top:489.6px;width:4.6px;height:14.3px;background:#e6c268;"></div>
<div class="fb" style="left:489.0px;top:489.6px;width:1.0px;height:14.3px;background:#f0d890;"></div>
<div class="fb" style="left:492.2px;top:489.6px;width:10.4px;height:14.3px;background:#e6c268;"></div>
<div class="fb" style="left:503.4px;top:489.6px;width:8.2px;height:14.3px;background:#e4c86c;"></div>
<div class="fb" style="left:512.4px;top:489.6px;width:5.6px;height:14.3px;background:#e6c268;"></div>
<div class="fb" style="left:524.6px;top:489.6px;width:6.0px;height:14.3px;background:#f0e070;"></div>
<div class="fb" style="left:531.4px;top:489.6px;width:7.6px;height:14.3px;background:#e6c268;"></div>
<div class="fb" style="left:539.8px;top:489.6px;width:7.2px;height:14.3px;background:#e6c268;"></div>
<div class="fb" style="left:554.2px;top:489.6px;width:1.0px;height:14.3px;background:#f9b450;"></div>
<div class="fb" style="left:559.6px;top:489.6px;width:15.0px;height:14.3px;background:#e6c268;"></div>
<div class="fb" style="left:575.4px;top:489.6px;width:14.2px;height:14.3px;background:#e6cc6a;"></div>
<div class="fb" style="left:590.4px;top:489.6px;width:8.1px;height:14.3px;background:#e6c268;"></div>
<div class="fb" style="left:604.2px;top:489.6px;width:94.8px;height:14.3px;background:#f2c858;padding-left:3.3px">Connect…[mount]</div>
<div class="fb" style="left:708.9px;top:489.6px;width:68.1px;height:14.3px;background:#f2c858;padding-left:3.3px">Conne…unt]</div>
<div class="fb" style="left:782.0px;top:489.6px;width:54.8px;height:14.3px;background:#f2c858;padding-left:3.3px">Con…nt]</div>
<div class="fb" style="left:461.7px;top:505.2px;width:8.9px;height:14.3px;background:#f6a652;"></div>
<div class="fb" style="left:471.4px;top:505.2px;width:10.6px;height:14.3px;background:#f9a04a;"></div>
<div class="fb" style="left:493.4px;top:505.2px;width:9.2px;height:14.3px;background:#f6a652;"></div>
<div class="fb" style="left:503.4px;top:505.2px;width:9.6px;height:14.3px;background:#f9a04a;"></div>
<div class="fb" style="left:514.0px;top:505.2px;width:4.0px;height:14.3px;background:#f8d850;"></div>
<div class="fb" style="left:527.4px;top:505.2px;width:6.2px;height:14.3px;background:#f6a652;"></div>
<div class="fb" style="left:534.4px;top:505.2px;width:6.6px;height:14.3px;background:#f9a04a;"></div>
<div class="fb" style="left:542.0px;top:505.2px;width:5.0px;height:14.3px;background:#f8d850;"></div>
<div class="fb" style="left:561.7px;top:505.2px;width:13.9px;height:14.3px;background:#f6a652;"></div>
<div class="fb" style="left:576.4px;top:505.2px;width:12.6px;height:14.3px;background:#f9a04a;"></div>
<div class="fb" style="left:593.0px;top:505.2px;width:6.0px;height:14.3px;background:#f8d850;"></div>
<div class="fb" style="left:603.2px;top:505.2px;width:2.2px;height:14.3px;background:#f3dc9a;"></div>
<div class="fb" style="left:605.9px;top:505.2px;width:93.1px;height:14.3px;background:#e8c870;padding-left:4.0px">TweetC…mount]</div>
<div class="fb" style="left:709.5px;top:505.2px;width:4.0px;height:14.3px;background:#f2a458;"></div>
<div class="fb" style="left:716.4px;top:505.2px;width:60.6px;height:14.3px;background:#e8c870;padding-left:4.0px">Twee…nt]</div>
<div class="fb" style="left:782.6px;top:505.2px;width:54.2px;height:14.3px;background:#e8c870;padding-left:4.0px">Twe…nt]</div>
<div class="fb" style="left:461.7px;top:520.8px;width:9.3px;height:14.3px;background:#e6c268;"></div>
<div class="fb" style="left:471.8px;top:520.8px;width:10.2px;height:14.3px;background:#f2a856;"></div>
<div class="fb" style="left:493.4px;top:520.8px;width:9.2px;height:14.3px;background:#e6c268;"></div>
<div class="fb" style="left:503.4px;top:520.8px;width:9.6px;height:14.3px;background:#f2a856;"></div>
<div class="fb" style="left:515.4px;top:520.8px;width:1.8px;height:14.3px;background:#f8d850;"></div>
<div class="fb" style="left:527.4px;top:520.8px;width:6.2px;height:14.3px;background:#e6c268;"></div>
<div class="fb" style="left:534.4px;top:520.8px;width:6.6px;height:14.3px;background:#f2a856;"></div>
<div class="fb" style="left:544.0px;top:520.8px;width:2.0px;height:14.3px;background:#f8d850;"></div>
<div class="fb" style="left:561.7px;top:520.8px;width:13.3px;height:14.3px;background:#e6c268;"></div>
<div class="fb" style="left:581.0px;top:520.8px;width:8.0px;height:14.3px;background:#f2a856;"></div>
<div class="fb" style="left:594.0px;top:520.8px;width:4.0px;height:14.3px;background:#f8d850;"></div>
<div class="fb" style="left:607.7px;top:520.8px;width:91.3px;height:14.3px;background:#e4b868;padding-left:4.0px">Tweet [mount]</div>
<div class="fb" style="left:717.0px;top:520.8px;width:1.4px;height:14.3px;background:#f2a458;"></div>
<div class="fb" style="left:719.0px;top:520.8px;width:58.0px;height:14.3px;background:#e4b868;padding-left:4.0px">Twee…nt]</div>
<div class="fb" style="left:785.0px;top:520.8px;width:51.8px;height:14.3px;background:#e4b868;padding-left:4.0px">Twe…nt]</div>
<div class="fb" style="left:463.0px;top:536.5px;width:4.0px;height:14.3px;background:#e8c860;"></div>
<div class="fb" style="left:468.0px;top:536.5px;width:3.4px;height:14.3px;background:#e8c860;"></div>
<div class="fb" style="left:473.0px;top:536.5px;width:5.0px;height:14.3px;background:#e8d060;"></div>
<div class="fb" style="left:479.6px;top:536.5px;width:2.4px;height:14.3px;background:#e8c860;"></div>
<div class="fb" style="left:495.0px;top:536.5px;width:6.0px;height:14.3px;background:#e8c860;"></div>
<div class="fb" style="left:503.0px;top:536.5px;width:3.0px;height:14.3px;background:#e8c860;"></div>
<div class="fb" style="left:508.0px;top:536.5px;width:2.4px;height:14.3px;background:#f0d860;"></div>
<div class="fb" style="left:516.0px;top:536.5px;width:2.0px;height:14.3px;background:#f29a50;"></div>
<div class="fb" style="left:529.0px;top:536.5px;width:4.0px;height:14.3px;background:#e8c860;"></div>
<div class="fb" style="left:534.4px;top:536.5px;width:3.6px;height:14.3px;background:#e8c860;"></div>
<div class="fb" style="left:544.6px;top:536.5px;width:1.4px;height:14.3px;background:#f29a50;"></div>
<div class="fb" style="left:564.0px;top:536.5px;width:1.2px;height:14.3px;background:#f0d860;"></div>
<div class="fb" style="left:567.5px;top:536.5px;width:8.5px;height:14.3px;background:#e8c860;"></div>
<div class="fb" style="left:581.5px;top:536.5px;width:1.5px;height:14.3px;background:#f0d860;"></div>
<div class="fb" style="left:585.0px;top:536.5px;width:1.4px;height:14.3px;background:#f0d860;"></div>
<div class="fb" style="left:595.0px;top:536.5px;width:3.0px;height:14.3px;background:#f29a50;"></div>
<div class="fb" style="left:608.5px;top:536.5px;width:1.9px;height:14.3px;background:#f6e278;"></div>
<div class="fb" style="left:611.4px;top:536.5px;width:87.6px;height:14.3px;background:#f0dc60;padding-left:4.0px">Connec…ount]</div>
<div class="fb" style="left:720.0px;top:536.5px;width:3.4px;height:14.3px;background:#f6e278;"></div>
<div class="fb" style="left:725.5px;top:536.5px;width:51.5px;height:14.3px;background:#f0dc60;padding-left:4.0px">Con…nt]</div>
<div class="fb" style="left:786.0px;top:536.5px;width:50.8px;height:14.3px;background:#f0dc60;padding-left:4.0px">Con…t]</div>
<div class="fb" style="left:464.0px;top:552.1px;width:7.0px;height:14.3px;background:#f6d850;"></div>
<div class="fb" style="left:480.0px;top:552.1px;width:1.2px;height:14.3px;background:#f2a868;"></div>
<div class="fb" style="left:496.0px;top:552.1px;width:6.0px;height:14.3px;background:#f6d850;"></div>
<div class="fb" style="left:510.0px;top:552.1px;width:1.2px;height:14.3px;background:#f2a868;"></div>
<div class="fb" style="left:516.0px;top:552.1px;width:1.2px;height:14.3px;background:#f2a868;"></div>
<div class="fb" style="left:529.5px;top:552.1px;width:2.5px;height:14.3px;background:#f6d850;"></div>
<div class="fb" style="left:538.0px;top:552.1px;width:1.0px;height:14.3px;background:#f2a868;"></div>
<div class="fb" style="left:544.5px;top:552.1px;width:1.0px;height:14.3px;background:#f2a868;"></div>
<div class="fb" style="left:568.0px;top:552.1px;width:7.0px;height:14.3px;background:#f6d850;"></div>
<div class="fb" style="left:586.0px;top:552.1px;width:1.0px;height:14.3px;background:#f2a868;"></div>
<div class="fb" style="left:596.0px;top:552.1px;width:1.2px;height:14.3px;background:#f2a868;"></div>
<div class="fb" style="left:612.8px;top:552.1px;width:86.2px;height:14.3px;background:#e8c868;padding-left:4.0px">Withhe…mount]</div>
<div class="fb" style="left:726.0px;top:552.1px;width:51.0px;height:14.3px;background:#e8c868;padding-left:4.0px">Wit…nt]</div>
<div class="fb" style="left:788.0px;top:552.1px;width:48.8px;height:14.3px;background:#e8c868;padding-left:4.0px">Wit…nt]</div>
<div class="fb" style="left:464.5px;top:567.7px;width:1.7px;height:14.3px;background:#f0a050;"></div>
<div class="fb" style="left:468.0px;top:567.7px;width:2.0px;height:14.3px;background:#f0b060;"></div>
<div class="fb" style="left:497.0px;top:567.7px;width:2.0px;height:14.3px;background:#f0a050;"></div>
<div class="fb" style="left:501.0px;top:567.7px;width:2.0px;height:14.3px;background:#f0b060;"></div>
<div class="fb" style="left:530.0px;top:567.7px;width:2.0px;height:14.3px;background:#f0a050;"></div>
<div class="fb" style="left:572.0px;top:567.7px;width:3.0px;height:14.3px;background:#f0a050;"></div>
<div class="fb" style="left:614.4px;top:567.7px;width:84.6px;height:14.3px;background:#f8a048;padding-left:4.0px">Withhe…ount]</div>
<div class="fb" style="left:727.8px;top:567.7px;width:49.2px;height:14.3px;background:#f8a048;padding-left:4.0px">Wit…nt]</div>
<div class="fb" style="left:790.0px;top:567.7px;width:46.8px;height:14.3px;background:#f8a048;padding-left:4.0px">Wit…nt]</div>
<div class="fb" style="left:465.4px;top:583.3px;width:1.2px;height:14.3px;background:#f0a868;"></div>
<div class="fb" style="left:468.8px;top:583.3px;width:1.2px;height:14.3px;background:#f0a868;"></div>
<div class="fb" style="left:497.8px;top:583.3px;width:1.2px;height:14.3px;background:#f0a868;"></div>
<div class="fb" style="left:501.2px;top:583.3px;width:1.2px;height:14.3px;background:#f0a868;"></div>
<div class="fb" style="left:530.4px;top:583.3px;width:1.2px;height:14.3px;background:#f0a868;"></div>
<div class="fb" style="left:573.6px;top:583.3px;width:1.4px;height:14.3px;background:#f0a868;"></div>
<div class="fb" style="left:614.8px;top:583.3px;width:84.2px;height:14.3px;background:#f0e058;padding-left:4.0px">GridVi…mount]</div>
<div class="fb" style="left:728.6px;top:583.3px;width:48.4px;height:14.3px;background:#f0e058;padding-left:4.0px">Gri…nt]</div>
<div class="fb" style="left:790.0px;top:583.3px;width:46.8px;height:14.3px;background:#f0e058;padding-left:4.0px">Gri…nt]</div>
<div class="fb" style="left:466.0px;top:599.0px;width:1.0px;height:14.3px;background:#f5c090;"></div>
<div class="fb" style="left:469.2px;top:599.0px;width:1.0px;height:14.3px;background:#f5c090;"></div>
<div class="fb" style="left:498.4px;top:599.0px;width:1.0px;height:14.3px;background:#f5c090;"></div>
<div class="fb" style="left:501.0px;top:599.0px;width:1.0px;height:14.3px;background:#f5c090;"></div>
<div class="fb" style="left:530.8px;top:599.0px;width:1.0px;height:14.3px;background:#f5c090;"></div>
<div class="fb" style="left:574.2px;top:599.0px;width:1.0px;height:14.3px;background:#f5c090;"></div>
<div class="fb" style="left:615.4px;top:599.0px;width:83.0px;height:14.3px;background:#e8c068;padding-left:4.0px">View [mount]</div>
<div class="fb" style="left:729.0px;top:599.0px;width:48.0px;height:14.3px;background:#e8c068;padding-left:4.0px">Vie…nt]</div>
<div class="fb" style="left:791.0px;top:599.0px;width:45.8px;height:14.3px;background:#e8c068;padding-left:4.0px">Vie…t]</div>
<div class="fb" style="left:616.4px;top:614.6px;width:82.0px;height:7.4px;background:#e8c46a;padding-left:11px">View [mount]</div>
<div class="fb" style="left:731.0px;top:614.6px;width:46.0px;height:7.4px;background:#e8c46a;padding-left:8px">Vie…t]</div>
<div class="fb" style="left:792.0px;top:614.6px;width:44.8px;height:7.4px;background:#e8c46a;padding-left:8px">Vi…t]</div>
<div class="abs" style="left:0;top:191px;width:1177px;height:15.6px;background:rgba(255,255,255,.52)"></div>
<div class="abs" style="left:35.3px;top:191px;width:1px;height:431px;background:rgba(0,0,0,.06)"></div>
<div class="abs" style="left:156.5px;top:191px;width:1px;height:431px;background:rgba(0,0,0,.06)"></div>
<div class="rl" style="left:92.2px;top:193.4px">850 ms</div>
<div class="abs" style="left:277.7px;top:191px;width:1px;height:431px;background:rgba(0,0,0,.06)"></div>
<div class="rl" style="left:213.4px;top:193.4px">900 ms</div>
<div class="abs" style="left:398.9px;top:191px;width:1px;height:431px;background:rgba(0,0,0,.06)"></div>
<div class="rl" style="left:334.6px;top:193.4px">950 ms</div>
<div class="abs" style="left:520.2px;top:191px;width:1px;height:431px;background:rgba(0,0,0,.06)"></div>
<div class="rl" style="left:455.9px;top:193.4px">1000 ms</div>
<div class="abs" style="left:641.4px;top:191px;width:1px;height:431px;background:rgba(0,0,0,.06)"></div>
<div class="rl" style="left:577.1px;top:193.4px">1050 ms</div>
<div class="abs" style="left:762.6px;top:191px;width:1px;height:431px;background:rgba(0,0,0,.06)"></div>
<div class="rl" style="left:698.3px;top:193.4px">1100 ms</div>
<div class="abs" style="left:883.8px;top:191px;width:1px;height:431px;background:rgba(0,0,0,.06)"></div>
<div class="rl" style="left:819.5px;top:193.4px">1150 ms</div>
<div class="abs" style="left:1005.0px;top:191px;width:1px;height:431px;background:rgba(0,0,0,.06)"></div>
<div class="rl" style="left:940.7px;top:193.4px">1200 ms</div>
<div class="abs" style="left:1126.3px;top:191px;width:1px;height:431px;background:rgba(0,0,0,.06)"></div>
<div class="rl" style="left:1062.0px;top:193.4px">1250 ms</div>
<div class="abs" style="left:1167.2px;top:228.5px;width:7px;height:30.6px;border-radius:3.5px;background:#c1c1c1"></div>
<div class="abs" style="left:0;top:622px;width:1177px;height:26px;background:#f3f3f3;border-top:1px solid #b9b9b9;border-bottom:1px solid #d4d4d4"></div>
<div class="abs" style="left:0;top:648px;width:1177px;height:3px;background:#fafafa"></div>
<div class="abs" style="left:4.200000000000003px;top:625px;width:56.4px;height:22px;background:#fff;border:1px solid #cfcfcf;border-bottom:none"></div>
<span class="abs" style="left:8.6px;top:628.5px;font-size:11px;line-height:14px;color:#222;white-space:nowrap">Summary</span>
<span class="abs" style="left:65.6px;top:628.5px;font-size:11px;line-height:14px;color:#444;white-space:nowrap;letter-spacing:.35px">Bottom-Up</span>
<span class="abs" style="left:131.0px;top:628.5px;font-size:11px;line-height:14px;color:#444;white-space:nowrap">Call Tree</span>
<span class="abs" style="left:183.6px;top:628.5px;font-size:11px;line-height:14px;color:#444;white-space:nowrap">Event Log</span>
</div></div>
<div class="abs" style="left:491.6px;top:343px;width:216px;height:20.2px;background:#fff;box-shadow:0 1px 3px rgba(0,0,0,.28);font-size:11.1px;line-height:14px;white-space:nowrap"><span class="abs" style="left:8px;top:3.4px;color:#2b9a2b">1.69ms</span><span class="abs" style="left:50px;top:3.4px;color:#3c3c3c">Timeline [componentWillMount]</span></div>
<svg class="abs" style="left:0;top:0;pointer-events:none" width="1280" height="755" viewBox="0 0 1280 755"><path d="M469.4 329.3A9 9 0 0 1 478.4 320.3H725.2A9 9 0 0 1 734.2 329.3V384.6A9 9 0 0 1 725.2 393.6H478.4A9 9 0 0 1 469.4 384.6Z" fill="none" stroke="#157a12" stroke-width="5.3" stroke-linecap="round" stroke-dasharray="10 12.025" stroke-dashoffset="-3.31"/><path d="M931 329L726 342" stroke="#157a12" stroke-width="3.3" fill="none"/><path d="M717.3 342.6L727.6 335.4L728.5 349.6Z" fill="#157a12"/><circle cx="931" cy="329" r="6.3" fill="#157a12"/><text x="952" y="335" font-family="Liberation Sans, sans-serif" font-weight="bold" font-size="22" fill="#157a12">Down to 1ms!</text></svg>
</body></html>
